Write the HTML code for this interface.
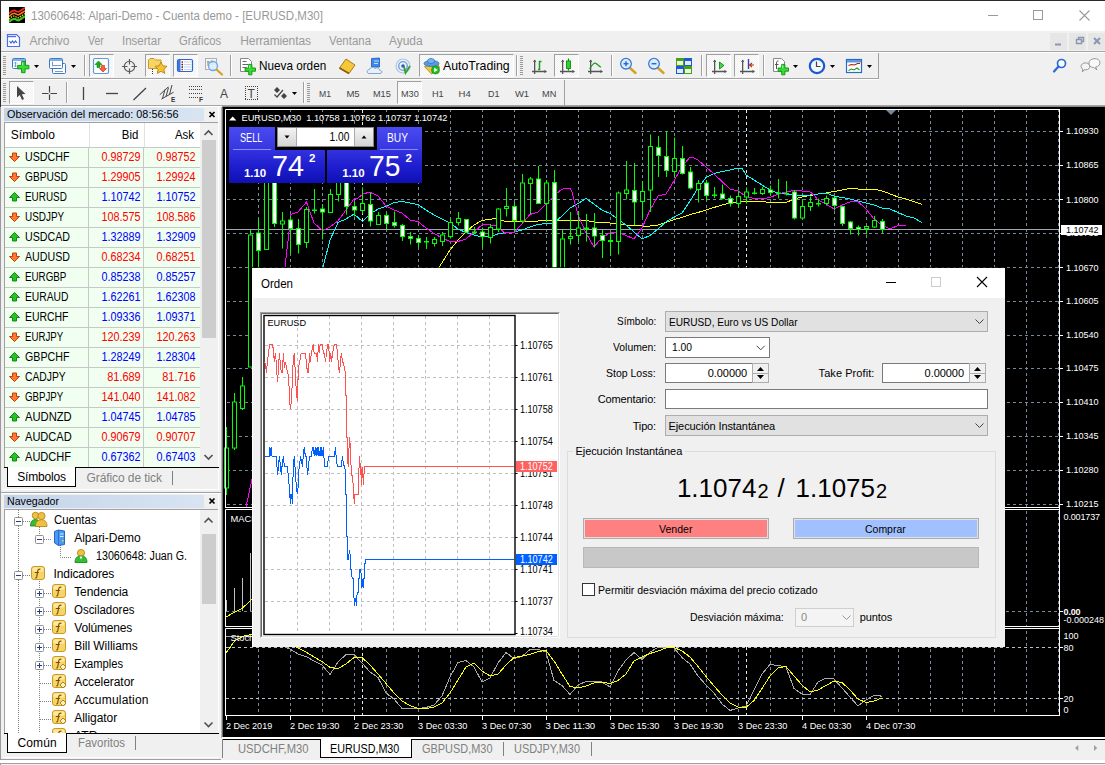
<!DOCTYPE html>
<html lang="es"><head><meta charset="utf-8"><title>13060648: Alpari-Demo - Cuenta demo - [EURUSD,M30]</title>
<style>
html,body{margin:0;padding:0;}
body{width:1105px;height:765px;overflow:hidden;position:relative;background:#f0f0f0;font-family:"Liberation Sans",sans-serif;font-size:12px;}
.t{position:absolute;white-space:pre;}
.r{position:absolute;box-sizing:border-box;}
svg{overflow:visible;}
svg text{font-family:"Liberation Sans",sans-serif;}
</style></head><body>
<div class="r" style="left:0px;top:0px;width:1105px;height:31px;background:#fff;"></div>
<div class="r" style="left:0px;top:0px;width:1105px;height:1px;background:#2a2a2a;"></div>
<svg class="r" style="left:9px;top:7px;overflow:hidden;" width="16" height="16" viewBox="0 0 16 16"><rect width="16" height="16" fill="#000"/><path d="M0 6.5 C2 4.5 4 2.5 6 3.5 S9 6 11 4 L16 0.8" stroke="#ff2a1a" stroke-width="1.7" fill="none"/><path d="M0 9.5 C2 7.5 4 5.5 6 6.5 S9 9 11 7 L16 3.8" stroke="#ff7a1a" stroke-width="1.6" fill="none"/><path d="M0 12.3 C2 10.3 4 8.3 6 9.3 S9 11.8 11 9.8 L16 6.6" stroke="#e8e010" stroke-width="1.3" fill="none" stroke-dasharray="1.5 1"/><path d="M0 15 C2 13 4 11 6 12 S9 14.5 11 12.5 L16 9.3" stroke="#3fc41c" stroke-width="2.2" fill="none"/></svg>
<div class="t" style="left:31.00px;top:7.80px;font-size:12px;line-height:16px;color:#999;transform:scaleX(0.9622);transform-origin:0 50%;">13060648: Alpari-Demo - Cuenta demo - [EURUSD,M30]</div>
<svg class="r" style="left:984px;top:9px;" width="110" height="14" viewBox="0 0 110 14"><path d="M4 6.500H14" stroke="#9a9a9a" stroke-width="1"/><rect x="49.5" y="1.5" width="9" height="9" fill="none" stroke="#9a9a9a" stroke-width="1"/><path d="M95.500 1.500L105.500 11.500M105.500 1.500L95.500 11.500" stroke="#9a9a9a" stroke-width="1.100"/></svg>
<div class="r" style="left:0px;top:31px;width:1105px;height:20px;background:#f0f0f0;"></div>
<svg class="r" style="left:6px;top:33px;" width="15" height="15" viewBox="0 0 15 15"><path d="M1.5 1.5H10.5L13.5 4.5V13.5H1.5Z" fill="#fff" stroke="#4a6cf0" stroke-width="1.2"/><path d="M1.5 3.5H10" stroke="#4a6cf0" stroke-width="1.4"/><path d="M3.5 8L5 10L6.5 8L8 10L9.5 8L11 10" stroke="#3a5ce0" stroke-width="1.1" fill="none"/></svg>
<div class="t" style="left:29.50px;top:33.20px;font-size:12px;line-height:16px;color:#9a9a9a;letter-spacing:-0.002px;">Archivo</div>
<div class="t" style="left:88.30px;top:33.20px;font-size:12px;line-height:16px;color:#9a9a9a;transform:scaleX(0.8717);transform-origin:0 50%;">Ver</div>
<div class="t" style="left:122.00px;top:33.20px;font-size:12px;line-height:16px;color:#9a9a9a;transform:scaleX(0.9587);transform-origin:0 50%;">Insertar</div>
<div class="t" style="left:179.40px;top:33.20px;font-size:12px;line-height:16px;color:#9a9a9a;transform:scaleX(0.9423);transform-origin:0 50%;">Gráficos</div>
<div class="t" style="left:240.30px;top:33.20px;font-size:12px;line-height:16px;color:#9a9a9a;letter-spacing:-0.127px;">Herramientas</div>
<div class="t" style="left:328.60px;top:33.20px;font-size:12px;line-height:16px;color:#9a9a9a;transform:scaleX(0.9536);transform-origin:0 50%;">Ventana</div>
<div class="t" style="left:389.00px;top:33.20px;font-size:12px;line-height:16px;color:#9a9a9a;letter-spacing:-0.042px;">Ayuda</div>
<div class="r" style="left:1050px;top:33px;width:17px;height:17px;background:#e6e6e6;"></div>
<div class="r" style="left:1069px;top:33px;width:17px;height:17px;background:#e6e6e6;"></div>
<div class="r" style="left:1088px;top:33px;width:17px;height:17px;background:#e6e6e6;"></div>
<svg class="r" style="left:1050px;top:33px;" width="55" height="17" viewBox="0 0 55 17"><path d="M5 11.5H11" stroke="#8a96b0" stroke-width="2"/><path d="M26.5 6.5H31.5V10.5H26.5Z M28.5 6.5V4.5H33.5V8.5H31.5" fill="none" stroke="#8a96b0" stroke-width="1.4"/><path d="M44 5L50 11M50 5L44 11" stroke="#8a96b0" stroke-width="2"/></svg>
<div class="r" style="left:0px;top:51px;width:1105px;height:1px;background:#a5a5a5;"></div>
<div class="r" style="left:0px;top:52px;width:1105px;height:1px;background:#fff;"></div>
<div class="r" style="left:0px;top:78px;width:879px;height:1px;background:#a5a5a5;"></div>
<div class="r" style="left:0px;top:79px;width:879px;height:1px;background:#fff;"></div>
<div class="r" style="left:0px;top:105px;width:1105px;height:1px;background:#a5a5a5;"></div>
<div class="r" style="left:0px;top:106px;width:1105px;height:1px;background:#fff;"></div>
<div class="r" style="left:0px;top:0px;width:1px;height:107px;background:#2a2a2a;"></div>
<div class="r" style="left:0px;top:107px;width:1px;height:658px;background:#9a9a9a;"></div>
<div class="r" style="left:89px;top:54px;width:25px;height:23px;background-image:conic-gradient(#fff 25%,#f0f0f0 0 50%,#fff 0 75%,#f0f0f0 0);background-size:2px 2px;border-top:1px solid #a0a0a0;border-left:1px solid #a0a0a0;border-bottom:1px solid #fff;border-right:1px solid #fff;"></div>
<div class="r" style="left:145px;top:54px;width:25px;height:23px;background-image:conic-gradient(#fff 25%,#f0f0f0 0 50%,#fff 0 75%,#f0f0f0 0);background-size:2px 2px;border-top:1px solid #a0a0a0;border-left:1px solid #a0a0a0;border-bottom:1px solid #fff;border-right:1px solid #fff;"></div>
<div class="r" style="left:173px;top:54px;width:25px;height:23px;background-image:conic-gradient(#fff 25%,#f0f0f0 0 50%,#fff 0 75%,#f0f0f0 0);background-size:2px 2px;border-top:1px solid #a0a0a0;border-left:1px solid #a0a0a0;border-bottom:1px solid #fff;border-right:1px solid #fff;"></div>
<div class="r" style="left:419px;top:54px;width:95px;height:23px;background-image:conic-gradient(#fff 25%,#f0f0f0 0 50%,#fff 0 75%,#f0f0f0 0);background-size:2px 2px;border-top:1px solid #a0a0a0;border-left:1px solid #a0a0a0;border-bottom:1px solid #fff;border-right:1px solid #fff;"></div>
<div class="r" style="left:554px;top:54px;width:25px;height:23px;background-image:conic-gradient(#fff 25%,#f0f0f0 0 50%,#fff 0 75%,#f0f0f0 0);background-size:2px 2px;border-top:1px solid #a0a0a0;border-left:1px solid #a0a0a0;border-bottom:1px solid #fff;border-right:1px solid #fff;"></div>
<div class="r" style="left:706px;top:54px;width:25px;height:23px;background-image:conic-gradient(#fff 25%,#f0f0f0 0 50%,#fff 0 75%,#f0f0f0 0);background-size:2px 2px;border-top:1px solid #a0a0a0;border-left:1px solid #a0a0a0;border-bottom:1px solid #fff;border-right:1px solid #fff;"></div>
<div class="r" style="left:734px;top:54px;width:25px;height:23px;background-image:conic-gradient(#fff 25%,#f0f0f0 0 50%,#fff 0 75%,#f0f0f0 0);background-size:2px 2px;border-top:1px solid #a0a0a0;border-left:1px solid #a0a0a0;border-bottom:1px solid #fff;border-right:1px solid #fff;"></div>
<div class="r" style="left:9px;top:81px;width:25px;height:23px;background-image:conic-gradient(#fff 25%,#f0f0f0 0 50%,#fff 0 75%,#f0f0f0 0);background-size:2px 2px;border-top:1px solid #a0a0a0;border-left:1px solid #a0a0a0;border-bottom:1px solid #fff;border-right:1px solid #fff;"></div>
<div class="r" style="left:397px;top:81px;width:25px;height:23px;background-image:conic-gradient(#fff 25%,#f0f0f0 0 50%,#fff 0 75%,#f0f0f0 0);background-size:2px 2px;border-top:1px solid #a0a0a0;border-left:1px solid #a0a0a0;border-bottom:1px solid #fff;border-right:1px solid #fff;"></div>
<svg class="r" style="left:0px;top:0px;" width="1105" height="765" viewBox="0 0 1105 765"><rect x="3" y="56" width="3" height="1" fill="#9a9a9a"/><rect x="3" y="58" width="3" height="1" fill="#9a9a9a"/><rect x="3" y="60" width="3" height="1" fill="#9a9a9a"/><rect x="3" y="62" width="3" height="1" fill="#9a9a9a"/><rect x="3" y="64" width="3" height="1" fill="#9a9a9a"/><rect x="3" y="66" width="3" height="1" fill="#9a9a9a"/><rect x="3" y="68" width="3" height="1" fill="#9a9a9a"/><rect x="3" y="70" width="3" height="1" fill="#9a9a9a"/><rect x="3" y="72" width="3" height="1" fill="#9a9a9a"/><rect x="3" y="74" width="3" height="1" fill="#9a9a9a"/><rect x="3" y="83" width="3" height="1" fill="#9a9a9a"/><rect x="3" y="85" width="3" height="1" fill="#9a9a9a"/><rect x="3" y="87" width="3" height="1" fill="#9a9a9a"/><rect x="3" y="89" width="3" height="1" fill="#9a9a9a"/><rect x="3" y="91" width="3" height="1" fill="#9a9a9a"/><rect x="3" y="93" width="3" height="1" fill="#9a9a9a"/><rect x="3" y="95" width="3" height="1" fill="#9a9a9a"/><rect x="3" y="97" width="3" height="1" fill="#9a9a9a"/><rect x="3" y="99" width="3" height="1" fill="#9a9a9a"/><rect x="3" y="101" width="3" height="1" fill="#9a9a9a"/><rect x="520" y="56" width="3" height="1" fill="#9a9a9a"/><rect x="520" y="58" width="3" height="1" fill="#9a9a9a"/><rect x="520" y="60" width="3" height="1" fill="#9a9a9a"/><rect x="520" y="62" width="3" height="1" fill="#9a9a9a"/><rect x="520" y="64" width="3" height="1" fill="#9a9a9a"/><rect x="520" y="66" width="3" height="1" fill="#9a9a9a"/><rect x="520" y="68" width="3" height="1" fill="#9a9a9a"/><rect x="520" y="70" width="3" height="1" fill="#9a9a9a"/><rect x="520" y="72" width="3" height="1" fill="#9a9a9a"/><rect x="520" y="74" width="3" height="1" fill="#9a9a9a"/><rect x="307" y="83" width="3" height="1" fill="#9a9a9a"/><rect x="307" y="85" width="3" height="1" fill="#9a9a9a"/><rect x="307" y="87" width="3" height="1" fill="#9a9a9a"/><rect x="307" y="89" width="3" height="1" fill="#9a9a9a"/><rect x="307" y="91" width="3" height="1" fill="#9a9a9a"/><rect x="307" y="93" width="3" height="1" fill="#9a9a9a"/><rect x="307" y="95" width="3" height="1" fill="#9a9a9a"/><rect x="307" y="97" width="3" height="1" fill="#9a9a9a"/><rect x="307" y="99" width="3" height="1" fill="#9a9a9a"/><rect x="307" y="101" width="3" height="1" fill="#9a9a9a"/><rect x="84" y="55" width="1" height="21" fill="#a0a0a0"/><rect x="85" y="55" width="1" height="21" fill="#fff"/><rect x="230" y="55" width="1" height="21" fill="#a0a0a0"/><rect x="231" y="55" width="1" height="21" fill="#fff"/><rect x="516" y="55" width="1" height="21" fill="#a0a0a0"/><rect x="517" y="55" width="1" height="21" fill="#fff"/><rect x="611" y="55" width="1" height="21" fill="#a0a0a0"/><rect x="612" y="55" width="1" height="21" fill="#fff"/><rect x="701" y="55" width="1" height="21" fill="#a0a0a0"/><rect x="702" y="55" width="1" height="21" fill="#fff"/><rect x="763" y="55" width="1" height="21" fill="#a0a0a0"/><rect x="764" y="55" width="1" height="21" fill="#fff"/><rect x="66" y="82" width="1" height="21" fill="#a0a0a0"/><rect x="67" y="82" width="1" height="21" fill="#fff"/><rect x="303" y="82" width="1" height="21" fill="#a0a0a0"/><rect x="304" y="82" width="1" height="21" fill="#fff"/><rect x="564" y="80" width="1" height="25" fill="#a0a0a0"/><rect x="878" y="53" width="1" height="26" fill="#a0a0a0"/><rect x="12.5" y="58.5" width="13" height="10" rx="1" fill="#fff" stroke="#3a7ac8"/><rect x="13" y="59" width="12" height="2" fill="#7fb0e8"/><path d="M15.5 62v5M14 63.5l1.5-1.5 1.5 1.5M14 65.5l1.5 1.5 1.5-1.5" stroke="#6a8ec0" stroke-width=".8" fill="none"/><path d="M21.55 61.5h3.5v3.85h3.85v3.5h-3.85v3.85h-3.5v-3.85h-3.85v-3.5h3.85z" fill="#35dd35" stroke="#109010" stroke-width=".9"/><path d="M22.45 62.5v2.85" stroke="#9cf59c" stroke-width="1"/><path d="M34 65h5l-2.5 3z" fill="#000"/><rect x="52.5" y="63.5" width="13" height="10" rx="1" fill="#fff" stroke="#3a7ac8"/><rect x="49.5" y="58.5" width="13" height="10" rx="1" fill="#fff" stroke="#3a7ac8"/><rect x="50" y="59" width="12" height="2" fill="#7fb0e8"/><path d="M52.5 61.5v5M53 65.5h8M55 71.5h8" stroke="#6a8ec0" stroke-width=".9" fill="none"/><path d="M71 65h5l-2.5 3z" fill="#000"/><rect x="93.5" y="58.5" width="15" height="15" rx="1.5" fill="#fff" stroke="#5a9ae0" stroke-width="1.2"/><path d="M98.5 61l3.5 3.5h-2v3h-3v-3h-2z" fill="#18b018" stroke="#0a800a" stroke-width=".6"/><path d="M103 72l-3.500-3.500h2v-3h3v3h2z" fill="#ff6040" stroke="#d02000" stroke-width=".6"/><circle cx="129.500" cy="66.500" r="5.200" fill="none" stroke="#5a5a5a" stroke-width="1.100"/><path d="M129.500 59v5.500M129.500 68.500v5.500M122 66.500h5.500M131.500 66.500h5.500" stroke="#5a5a5a" stroke-width="1.200"/><path d="M148.500 68.500v-8.500l1.500-1.500h4l1.500 1.500h5.500v8.500z" fill="#f8d468" stroke="#c89a20"/><path d="M161 62l1.800 3.800 4.200.5-3.100 2.900.8 4.200-3.700-2.100-3.700 2.100.8-4.200-3.100-2.900 4.200-.5z" fill="#f4c430" stroke="#b8860b" stroke-width=".9"/><path d="M152.500 69v5" stroke="#333" stroke-width="1" stroke-dasharray="1 1"/><rect x="177.500" y="59.500" width="15" height="12" rx="1.500" fill="#fff" stroke="#2a66d0" stroke-width="1.200"/><rect x="178" y="60" width="2.500" height="11" fill="#3a7ae0"/><path d="M184 62h7.500M184 64.500h7.500M184 67h7.500M184 69.500h7.500" stroke="#b4c8ec" stroke-width=".8"/><rect x="181.500" y="61.300" width="1.500" height="1.500" fill="#e00"/><rect x="181.500" y="63.800" width="1.500" height="1.500" fill="#222"/><rect x="181.500" y="66.300" width="1.500" height="1.500" fill="#222"/><rect x="181.500" y="68.800" width="1.500" height="1.500" fill="#e00"/><rect x="205.500" y="58.500" width="11" height="11" fill="#f4f4f4" stroke="#b0b0b0"/><path d="M208 61v5M212 60v5M207 62h6" stroke="#888" stroke-width=".9"/><circle cx="213" cy="66" r="4.500" fill="#d8ecff" fill-opacity=".85" stroke="#6aa8e8" stroke-width="1.300"/><path d="M216.500 69.500l5.500 5" stroke="#d8a020" stroke-width="2.200" stroke-linecap="round"/><path d="M240.500 58.500h8l3 3v10h-11z" fill="#fff" stroke="#888"/><path d="M242.500 61.500h4M242.500 64.500h6M242.500 67.500h4" stroke="#666" stroke-width="1"/><path d="M248.7 64.4h3.2v3.6h3.6v3.2h-3.6v3.6h-3.2v-3.6h-3.6v-3.2h3.6z" fill="#35dd35" stroke="#109010" stroke-width=".9"/><path d="M249.6 65.4v2.6" stroke="#9cf59c" stroke-width="1"/><path d="M339.500 68l6.500-9 9 6-6 8.500z" fill="#f4c838" stroke="#b07818" stroke-width="1"/><path d="M339.500 68l9.500 5.500" stroke="#8a5a10" stroke-width="1.600"/><path d="M371.500 58.500l8-.5v9h-8z" fill="#3a8ae8" stroke="#1a5ac0" stroke-width=".8"/><path d="M374 61h5M374 63.500h4" stroke="#cfe4ff" stroke-width=".9"/><path d="M369 73.500c-2.500 0-2.500-4 .5-4 .5-2.500 4-3 5.500-.8 1.500-1.800 4.500-.8 4.500 1.500 3 0 3 3.300.5 3.300z" fill="#e8f0fa" stroke="#7a9ac8" stroke-width=".9"/><circle cx="403" cy="66" r="7" fill="none" stroke="#a8c4e8" stroke-width="1.200"/><circle cx="403" cy="66" r="4.300" fill="none" stroke="#6a9ae0" stroke-width="1.300"/><circle cx="403" cy="66" r="1.800" fill="#2a5ad0"/><path d="M404 66.500l1.500 6.500 4.500-7" stroke="#30a030" stroke-width="1.800" fill="none"/><path d="M424.500 66.500l7 7.500 8-6.500-2-4z" fill="#f0c840" stroke="#b08818" stroke-width=".9"/><ellipse cx="431.500" cy="63.500" rx="7.500" ry="3" fill="#5a9ae0" stroke="#2a6ac0" stroke-width=".8"/><ellipse cx="431" cy="61" rx="3.500" ry="2.500" fill="#7ab4f0" stroke="#2a6ac0" stroke-width=".7"/><circle cx="435.500" cy="70" r="4" fill="#20c020" stroke="#0a800a" stroke-width=".6"/><path d="M434.200 67.800v4.400l3.600-2.200z" fill="#fff"/><path d="M534.65 60v14M532 71.500h13" stroke="#555" stroke-width="1.300" fill="none"/><path d="M533 62l1.650-2.500 1.650 2.500zM544.5 69.800l2.500 1.700-2.500 1.700z" fill="#555"/><path d="M538 69.500h1.500v-8h2" stroke="#18a018" stroke-width="1.500" fill="none"/><path d="M562.65 60v14M560 71.500h13" stroke="#555" stroke-width="1.300" fill="none"/><path d="M561 62l1.650-2.500 1.650 2.500zM572.5 69.800l2.500 1.700-2.500 1.700z" fill="#555"/><rect x="566.500" y="61" width="4" height="7.500" fill="#30d030" stroke="#0a900a" stroke-width=".9"/><path d="M568.500 58.500v2.500M568.500 68.500v2" stroke="#0a900a" stroke-width="1.200"/><path d="M590.65 60v14M588 71.500h13" stroke="#555" stroke-width="1.300" fill="none"/><path d="M589 62l1.650-2.500 1.650 2.500zM600.5 69.800l2.500 1.700-2.500 1.700z" fill="#555"/><path d="M589.500 69c2-2.500 3.500-6 5.500-5.800s3.500 3 6 4" stroke="#18a018" stroke-width="1.200" fill="none"/><path d="M630 68l5.500 5" stroke="#d8a020" stroke-width="2.400" stroke-linecap="round"/><circle cx="626" cy="63.700" r="5.300" fill="#dceeff" stroke="#3a7ad8" stroke-width="1.300"/><path d="M623.5 63.700h5" stroke="#2a6ad0" stroke-width="1.500"/><path d="M626 61.200v5" stroke="#2a6ad0" stroke-width="1.500"/><path d="M658 68l5.500 5" stroke="#d8a020" stroke-width="2.400" stroke-linecap="round"/><circle cx="654" cy="63.700" r="5.300" fill="#dceeff" stroke="#3a7ad8" stroke-width="1.300"/><path d="M651.5 63.700h5" stroke="#2a6ad0" stroke-width="1.500"/><rect x="676" y="58" width="8" height="8" fill="#48a018"/><rect x="684" y="58" width="8" height="8" fill="#2058d0"/><rect x="676" y="66" width="8" height="8" fill="#2058d0"/><rect x="684" y="66" width="8" height="8" fill="#48a018"/><rect x="677" y="61" width="6" height="4" fill="#e8ffe0"/><rect x="685" y="61" width="6" height="4" fill="#e0ecff"/><rect x="677" y="69" width="6" height="4" fill="#e0ecff"/><rect x="685" y="69" width="6" height="4" fill="#e8ffe0"/><path d="M714.65 60v14M712 71.500h13" stroke="#555" stroke-width="1.300" fill="none"/><path d="M713 62l1.650-2.500 1.650 2.500zM724.5 69.800l2.500 1.700-2.500 1.700z" fill="#555"/><path d="M719.500 62v7l4.500-3.500z" fill="#50d050" stroke="#0a900a" stroke-width=".9"/><path d="M742.65 60v14M740 71.500h13" stroke="#555" stroke-width="1.300" fill="none"/><path d="M741 62l1.650-2.500 1.650 2.500zM752.5 69.800l2.500 1.700-2.500 1.700z" fill="#555"/><path d="M748.500 59v10" stroke="#1a4ac0" stroke-width="1.400"/><path d="M754 65h-4M752 63l-2.500 2 2.500 2" stroke="#d03000" stroke-width="1.200" fill="none"/><path d="M773.500 58.500h8l3 3v10h-11z" fill="#fff" stroke="#888"/><path d="M778.500 61c-1.500 0-2 .5-2 2v6M775 64.500h3.500" stroke="#555" stroke-width="1" fill="none"/><path d="M781.7 64.4h3.2v3.6h3.6v3.2h-3.6v3.6h-3.2v-3.6h-3.6v-3.2h3.6z" fill="#35dd35" stroke="#109010" stroke-width=".9"/><path d="M782.6 65.4v2.6" stroke="#9cf59c" stroke-width="1"/><path d="M793 65h5l-2.5 3z" fill="#000"/><circle cx="817" cy="66" r="7.200" fill="#f4f8ff" stroke="#1a5ad0" stroke-width="2.200"/><path d="M816.500 61.500v5h4" stroke="#444" stroke-width="1.200" fill="none"/><path d="M830 65h5l-2.5 3z" fill="#000"/><rect x="846.500" y="59.500" width="15" height="13" fill="#fff" stroke="#2a6ac0" stroke-width="1.200"/><rect x="847" y="60" width="14" height="2.500" fill="#5a9ae8"/><path d="M848.500 65.500l3-1 3 .5 3-1.500 2.500 0" stroke="#b02000" stroke-width="1.100" fill="none"/><path d="M848.500 70.500l3-1.500 2.500 1 3-2 2.500 2" stroke="#18a018" stroke-width="1.100" fill="none"/><path d="M867 65h5l-2.5 3z" fill="#000"/><circle cx="1061.500" cy="63.500" r="4" fill="#fff" stroke="#2a6ad8" stroke-width="1.700"/><path d="M1058.500 66.500l-4.500 5" stroke="#2a6ad8" stroke-width="2.200" stroke-linecap="round"/><path d="M1081 66.500a4.500 3.500 0 1 1 3 3.200l-1.500 2.300v-2.800z" fill="#f4f4f4" stroke="#999" stroke-width="1"/><path d="M1089 63a5.500 4.200 0 1 1 6.500 4l1.500 2.800-3.500-2.300a5.500 4.200 0 0 1-4.500-4.500z" fill="#f8f8f8" stroke="#999" stroke-width="1"/><path d="M17 86v11.500l2.800-2.600 2.200 5 2-.9-2.200-4.800 3.700-.2z" fill="#444"/><path d="M49.500 86v14M42 93.500h15" stroke="#444" stroke-width="1.200"/><rect x="48.500" y="92.500" width="2" height="2" fill="#f0f0f0"/><path d="M83.500 87v13" stroke="#444" stroke-width="1.300"/><path d="M106 93.500h12" stroke="#444" stroke-width="1.300"/><path d="M133.500 100l12.500-12" stroke="#444" stroke-width="1.300"/><path d="M159.800 94.700l8.500-7.800M161.400 99.100l12.200-6.900M162.500 98.500l2.500-9M166 96.500l2.500-9M169.500 94.500l2.500-9.500" stroke="#444" stroke-width="1" fill="none"/><path d="M189 86.500h13M189 89.500h13M189 93.500h13M189 97.500h9" stroke="#444" stroke-width="1" stroke-dasharray="1 1"/><path d="M245 86.500H258M245 99.500H258M245.500 86V100M257.500 86V100" fill="none" stroke="#444" stroke-width="1" stroke-dasharray="1 1"/><path d="M277 87l3 3-3 3-3-3zM284 93l3 3-3 3-3-3z" fill="#444"/><path d="M274.500 94.500l2.500 2.500 6-7" stroke="#444" stroke-width="1.200" fill="none"/><path d="M292 92h5l-2.5 3z" fill="#000"/></svg>
<div class="t" style="left:171.00px;top:94.65px;font-size:6.5px;line-height:10.5px;color:#333;font-weight:bold;">E</div>
<div class="t" style="left:198.90px;top:94.65px;font-size:6.5px;line-height:10.5px;color:#333;font-weight:bold;">F</div>
<div class="t" style="left:220.00px;top:86.10px;font-size:12px;line-height:16px;color:#444;">A</div>
<div class="t" style="left:247.50px;top:86.10px;font-size:12px;line-height:16px;color:#444;">T</div>
<div class="t" style="left:259.30px;top:57.10px;font-size:13px;line-height:17px;color:#000;transform:scaleX(0.9027);transform-origin:0 50%;">Nueva orden</div>
<div class="t" style="left:443.30px;top:57.10px;font-size:13px;line-height:17px;color:#000;transform:scaleX(0.9482);transform-origin:0 50%;">AutoTrading</div>
<div class="t" style="left:319.00px;top:87.35px;font-size:9.5px;line-height:13.5px;color:#444;transform:scaleX(0.9093);transform-origin:0 50%;">M1</div>
<div class="t" style="left:346.50px;top:87.35px;font-size:9.5px;line-height:13.5px;color:#444;letter-spacing:-0.199px;">M5</div>
<div class="t" style="left:372.60px;top:87.35px;font-size:9.5px;line-height:13.5px;color:#444;transform:scaleX(0.9578);transform-origin:0 50%;">M15</div>
<div class="t" style="left:400.60px;top:87.35px;font-size:9.5px;line-height:13.5px;color:#444;transform:scaleX(0.9578);transform-origin:0 50%;">M30</div>
<div class="t" style="left:431.60px;top:87.35px;font-size:9.5px;line-height:13.5px;color:#444;transform:scaleX(0.9634);transform-origin:0 50%;">H1</div>
<div class="t" style="left:458.50px;top:87.35px;font-size:9.5px;line-height:13.5px;color:#444;letter-spacing:0.178px;">H4</div>
<div class="t" style="left:487.60px;top:87.35px;font-size:9.5px;line-height:13.5px;color:#444;transform:scaleX(0.9387);transform-origin:0 50%;">D1</div>
<div class="t" style="left:515.00px;top:87.35px;font-size:9.5px;line-height:13.5px;color:#444;letter-spacing:-0.125px;">W1</div>
<div class="t" style="left:542.00px;top:87.35px;font-size:9.5px;line-height:13.5px;color:#444;transform:scaleX(0.9678);transform-origin:0 50%;">MN</div>
<div class="r" style="left:4px;top:108px;width:200px;height:13px;background:linear-gradient(90deg,#c4d4e8,#d8e4f2);"></div>
<div class="t" style="left:6.50px;top:107.45px;font-size:11.5px;line-height:15.5px;color:#000;transform:scaleX(0.9412);transform-origin:0 50%;">Observación del mercado: 08:56:56</div>
<div class="r" style="left:4px;top:122px;width:215px;height:345px;background:#fff;border-left:1px solid #a0a0a0;border-top:1px solid #a0a0a0;"></div>
<div class="r" style="left:5px;top:148px;width:195px;height:319px;background:#f0fff0;"></div>
<svg class="r" style="left:0px;top:0px;" width="1105" height="765" viewBox="0 0 1105 765"><rect x="5" y="147" width="195" height="1" fill="#c8c8c8"/><rect x="89" y="123" width="1" height="24" fill="#e2e2e2"/><rect x="144" y="123" width="1" height="24" fill="#e2e2e2"/><rect x="88" y="148" width="1" height="319" fill="#c8c8c8"/><rect x="143" y="148" width="1" height="319" fill="#c8c8c8"/><rect x="5" y="167" width="195" height="1" fill="#c8c8c8"/><rect x="5" y="187" width="195" height="1" fill="#c8c8c8"/><rect x="5" y="207" width="195" height="1" fill="#c8c8c8"/><rect x="5" y="227" width="195" height="1" fill="#c8c8c8"/><rect x="5" y="247" width="195" height="1" fill="#c8c8c8"/><rect x="5" y="267" width="195" height="1" fill="#c8c8c8"/><rect x="5" y="287" width="195" height="1" fill="#c8c8c8"/><rect x="5" y="307" width="195" height="1" fill="#c8c8c8"/><rect x="5" y="327" width="195" height="1" fill="#c8c8c8"/><rect x="5" y="347" width="195" height="1" fill="#c8c8c8"/><rect x="5" y="367" width="195" height="1" fill="#c8c8c8"/><rect x="5" y="387" width="195" height="1" fill="#c8c8c8"/><rect x="5" y="407" width="195" height="1" fill="#c8c8c8"/><rect x="5" y="427" width="195" height="1" fill="#c8c8c8"/><rect x="5" y="447" width="195" height="1" fill="#c8c8c8"/><rect x="5" y="467" width="195" height="1" fill="#c8c8c8"/><rect x="200" y="123" width="18" height="344" fill="#f0f0f0"/><rect x="202" y="140" width="14" height="198" fill="#cdcdcd"/><path d="M204.500 135l4-4 4 4" stroke="#505050" stroke-width="1.600" fill="none"/><path d="M204.500 455l4 4 4-4" stroke="#505050" stroke-width="1.600" fill="none"/><rect x="218" y="107" width="1" height="383" fill="#fff"/><path d="M209.500 112l5 5M214.500 112l-5 5" stroke="#000" stroke-width="1.700"/><path d="M14.500 161.5l5-5h-3v-3.500h-4v3.500h-3z" fill="#ff7a30" stroke="#c03000" stroke-width=".9"/><path d="M14.500 181.5l5-5h-3v-3.500h-4v3.500h-3z" fill="#ff7a30" stroke="#c03000" stroke-width=".9"/><path d="M14.500 192.5l5 5h-3v3.500h-4v-3.500h-3z" fill="#22c322" stroke="#0a7a0a" stroke-width=".9"/><path d="M14.500 221.5l5-5h-3v-3.500h-4v3.500h-3z" fill="#ff7a30" stroke="#c03000" stroke-width=".9"/><path d="M14.500 232.5l5 5h-3v3.500h-4v-3.500h-3z" fill="#22c322" stroke="#0a7a0a" stroke-width=".9"/><path d="M14.500 261.5l5-5h-3v-3.500h-4v3.500h-3z" fill="#ff7a30" stroke="#c03000" stroke-width=".9"/><path d="M14.500 272.5l5 5h-3v3.500h-4v-3.500h-3z" fill="#22c322" stroke="#0a7a0a" stroke-width=".9"/><path d="M14.500 292.5l5 5h-3v3.500h-4v-3.500h-3z" fill="#22c322" stroke="#0a7a0a" stroke-width=".9"/><path d="M14.500 312.5l5 5h-3v3.500h-4v-3.500h-3z" fill="#22c322" stroke="#0a7a0a" stroke-width=".9"/><path d="M14.500 341.5l5-5h-3v-3.500h-4v3.500h-3z" fill="#ff7a30" stroke="#c03000" stroke-width=".9"/><path d="M14.500 352.5l5 5h-3v3.500h-4v-3.500h-3z" fill="#22c322" stroke="#0a7a0a" stroke-width=".9"/><path d="M14.500 381.5l5-5h-3v-3.500h-4v3.500h-3z" fill="#ff7a30" stroke="#c03000" stroke-width=".9"/><path d="M14.500 401.5l5-5h-3v-3.500h-4v3.500h-3z" fill="#ff7a30" stroke="#c03000" stroke-width=".9"/><path d="M14.500 412.5l5 5h-3v3.500h-4v-3.500h-3z" fill="#22c322" stroke="#0a7a0a" stroke-width=".9"/><path d="M14.500 441.5l5-5h-3v-3.500h-4v3.500h-3z" fill="#ff7a30" stroke="#c03000" stroke-width=".9"/><path d="M14.500 452.5l5 5h-3v3.500h-4v-3.500h-3z" fill="#22c322" stroke="#0a7a0a" stroke-width=".9"/></svg>
<div class="t" style="left:10.80px;top:127.30px;font-size:12px;line-height:16px;color:#000;letter-spacing:-0.003px;">Símbolo</div>
<div class="t" style="left:121.46px;top:127.30px;font-size:12px;line-height:16px;color:#000;transform:scaleX(0.9514);transform-origin:100% 50%;">Bid</div>
<div class="t" style="left:174.00px;top:127.30px;font-size:12px;line-height:16px;color:#000;transform:scaleX(0.9498);transform-origin:100% 50%;">Ask</div>
<div class="t" style="left:25.20px;top:149.30px;font-size:12px;line-height:16px;color:#000;transform:scaleX(0.8880);transform-origin:0 50%;">USDCHF</div>
<div class="t" style="left:97.32px;top:149.30px;font-size:12px;line-height:16px;color:#ff0000;transform:scaleX(0.8991);transform-origin:100% 50%;">0.98729</div>
<div class="t" style="left:152.42px;top:149.30px;font-size:12px;line-height:16px;color:#ff0000;transform:scaleX(0.8991);transform-origin:100% 50%;">0.98752</div>
<div class="t" style="left:25.20px;top:169.30px;font-size:12px;line-height:16px;color:#000;transform:scaleX(0.8465);transform-origin:0 50%;">GBPUSD</div>
<div class="t" style="left:97.32px;top:169.30px;font-size:12px;line-height:16px;color:#ff0000;transform:scaleX(0.8991);transform-origin:100% 50%;">1.29905</div>
<div class="t" style="left:152.42px;top:169.30px;font-size:12px;line-height:16px;color:#ff0000;transform:scaleX(0.8991);transform-origin:100% 50%;">1.29924</div>
<div class="t" style="left:25.20px;top:189.30px;font-size:12px;line-height:16px;color:#000;transform:scaleX(0.8249);transform-origin:0 50%;">EURUSD</div>
<div class="t" style="left:97.32px;top:189.30px;font-size:12px;line-height:16px;color:#0000ff;transform:scaleX(0.8991);transform-origin:100% 50%;">1.10742</div>
<div class="t" style="left:152.42px;top:189.30px;font-size:12px;line-height:16px;color:#0000ff;transform:scaleX(0.8991);transform-origin:100% 50%;">1.10752</div>
<div class="t" style="left:25.20px;top:209.30px;font-size:12px;line-height:16px;color:#000;transform:scaleX(0.8280);transform-origin:0 50%;">USDJPY</div>
<div class="t" style="left:97.32px;top:209.30px;font-size:12px;line-height:16px;color:#ff0000;transform:scaleX(0.8991);transform-origin:100% 50%;">108.575</div>
<div class="t" style="left:152.42px;top:209.30px;font-size:12px;line-height:16px;color:#ff0000;transform:scaleX(0.8991);transform-origin:100% 50%;">108.586</div>
<div class="t" style="left:25.20px;top:229.30px;font-size:12px;line-height:16px;color:#000;transform:scaleX(0.8881);transform-origin:0 50%;">USDCAD</div>
<div class="t" style="left:97.32px;top:229.30px;font-size:12px;line-height:16px;color:#0000ff;transform:scaleX(0.8991);transform-origin:100% 50%;">1.32889</div>
<div class="t" style="left:152.42px;top:229.30px;font-size:12px;line-height:16px;color:#0000ff;transform:scaleX(0.8991);transform-origin:100% 50%;">1.32909</div>
<div class="t" style="left:25.20px;top:249.30px;font-size:12px;line-height:16px;color:#000;transform:scaleX(0.8881);transform-origin:0 50%;">AUDUSD</div>
<div class="t" style="left:97.32px;top:249.30px;font-size:12px;line-height:16px;color:#ff0000;transform:scaleX(0.8991);transform-origin:100% 50%;">0.68234</div>
<div class="t" style="left:152.42px;top:249.30px;font-size:12px;line-height:16px;color:#ff0000;transform:scaleX(0.8991);transform-origin:100% 50%;">0.68251</div>
<div class="t" style="left:25.20px;top:269.30px;font-size:12px;line-height:16px;color:#000;transform:scaleX(0.8169);transform-origin:0 50%;">EURGBP</div>
<div class="t" style="left:97.32px;top:269.30px;font-size:12px;line-height:16px;color:#0000ff;transform:scaleX(0.8991);transform-origin:100% 50%;">0.85238</div>
<div class="t" style="left:152.42px;top:269.30px;font-size:12px;line-height:16px;color:#0000ff;transform:scaleX(0.8991);transform-origin:100% 50%;">0.85257</div>
<div class="t" style="left:25.20px;top:289.30px;font-size:12px;line-height:16px;color:#000;transform:scaleX(0.8585);transform-origin:0 50%;">EURAUD</div>
<div class="t" style="left:97.32px;top:289.30px;font-size:12px;line-height:16px;color:#0000ff;transform:scaleX(0.8991);transform-origin:100% 50%;">1.62261</div>
<div class="t" style="left:152.42px;top:289.30px;font-size:12px;line-height:16px;color:#0000ff;transform:scaleX(0.8991);transform-origin:100% 50%;">1.62308</div>
<div class="t" style="left:25.20px;top:309.30px;font-size:12px;line-height:16px;color:#000;transform:scaleX(0.8700);transform-origin:0 50%;">EURCHF</div>
<div class="t" style="left:97.32px;top:309.30px;font-size:12px;line-height:16px;color:#0000ff;transform:scaleX(0.8991);transform-origin:100% 50%;">1.09336</div>
<div class="t" style="left:152.42px;top:309.30px;font-size:12px;line-height:16px;color:#0000ff;transform:scaleX(0.8991);transform-origin:100% 50%;">1.09371</div>
<div class="t" style="left:25.20px;top:329.30px;font-size:12px;line-height:16px;color:#000;transform:scaleX(0.8069);transform-origin:0 50%;">EURJPY</div>
<div class="t" style="left:97.32px;top:329.30px;font-size:12px;line-height:16px;color:#ff0000;transform:scaleX(0.8991);transform-origin:100% 50%;">120.239</div>
<div class="t" style="left:152.42px;top:329.30px;font-size:12px;line-height:16px;color:#ff0000;transform:scaleX(0.8991);transform-origin:100% 50%;">120.263</div>
<div class="t" style="left:25.20px;top:349.30px;font-size:12px;line-height:16px;color:#000;transform:scaleX(0.8879);transform-origin:0 50%;">GBPCHF</div>
<div class="t" style="left:97.32px;top:349.30px;font-size:12px;line-height:16px;color:#0000ff;transform:scaleX(0.8991);transform-origin:100% 50%;">1.28249</div>
<div class="t" style="left:152.42px;top:349.30px;font-size:12px;line-height:16px;color:#0000ff;transform:scaleX(0.8991);transform-origin:100% 50%;">1.28304</div>
<div class="t" style="left:25.20px;top:369.30px;font-size:12px;line-height:16px;color:#000;transform:scaleX(0.8597);transform-origin:0 50%;">CADJPY</div>
<div class="t" style="left:104.00px;top:369.30px;font-size:12px;line-height:16px;color:#ff0000;transform:scaleX(0.9108);transform-origin:100% 50%;">81.689</div>
<div class="t" style="left:159.10px;top:369.30px;font-size:12px;line-height:16px;color:#ff0000;transform:scaleX(0.9108);transform-origin:100% 50%;">81.716</div>
<div class="t" style="left:25.20px;top:389.30px;font-size:12px;line-height:16px;color:#000;transform:scaleX(0.8068);transform-origin:0 50%;">GBPJPY</div>
<div class="t" style="left:97.32px;top:389.30px;font-size:12px;line-height:16px;color:#ff0000;transform:scaleX(0.8991);transform-origin:100% 50%;">141.040</div>
<div class="t" style="left:152.42px;top:389.30px;font-size:12px;line-height:16px;color:#ff0000;transform:scaleX(0.8991);transform-origin:100% 50%;">141.082</div>
<div class="t" style="left:25.20px;top:409.30px;font-size:12px;line-height:16px;color:#000;transform:scaleX(0.9340);transform-origin:0 50%;">AUDNZD</div>
<div class="t" style="left:97.32px;top:409.30px;font-size:12px;line-height:16px;color:#0000ff;transform:scaleX(0.8991);transform-origin:100% 50%;">1.04745</div>
<div class="t" style="left:152.42px;top:409.30px;font-size:12px;line-height:16px;color:#0000ff;transform:scaleX(0.8991);transform-origin:100% 50%;">1.04785</div>
<div class="t" style="left:25.20px;top:429.30px;font-size:12px;line-height:16px;color:#000;transform:scaleX(0.9216);transform-origin:0 50%;">AUDCAD</div>
<div class="t" style="left:97.32px;top:429.30px;font-size:12px;line-height:16px;color:#ff0000;transform:scaleX(0.8991);transform-origin:100% 50%;">0.90679</div>
<div class="t" style="left:152.42px;top:429.30px;font-size:12px;line-height:16px;color:#ff0000;transform:scaleX(0.8991);transform-origin:100% 50%;">0.90707</div>
<div class="t" style="left:25.20px;top:449.30px;font-size:12px;line-height:16px;color:#000;transform:scaleX(0.9220);transform-origin:0 50%;">AUDCHF</div>
<div class="t" style="left:97.32px;top:449.30px;font-size:12px;line-height:16px;color:#0000ff;transform:scaleX(0.8991);transform-origin:100% 50%;">0.67362</div>
<div class="t" style="left:152.42px;top:449.30px;font-size:12px;line-height:16px;color:#0000ff;transform:scaleX(0.8991);transform-origin:100% 50%;">0.67403</div>
<div class="r" style="left:4px;top:467px;width:215px;height:1px;background:#000;"></div>
<div class="r" style="left:7px;top:467px;width:69px;height:20px;background:#fff;border:1px solid #000;border-top:none;"></div>
<div class="t" style="left:17.30px;top:469.30px;font-size:12px;line-height:16px;color:#000;letter-spacing:-0.178px;">Símbolos</div>
<div class="t" style="left:86.50px;top:469.60px;font-size:12px;line-height:16px;color:#808080;letter-spacing:-0.086px;">Gráfico de tick</div>
<div class="r" style="left:172px;top:471px;width:1px;height:14px;background:#808080;"></div>
<div class="r" style="left:3px;top:489px;width:216px;height:1px;background:#fff;"></div>
<div class="r" style="left:1px;top:492px;width:220px;height:1px;background:#a0a0a0;"></div>
<div class="r" style="left:1px;top:493px;width:220px;height:1px;background:#fff;"></div>
<div class="r" style="left:4px;top:495px;width:200px;height:13px;background:linear-gradient(90deg,#c4d4e8,#d8e4f2);"></div>
<div class="t" style="left:6.50px;top:494.45px;font-size:11.5px;line-height:15.5px;color:#000;transform:scaleX(0.9242);transform-origin:0 50%;">Navegador</div>
<div class="r" style="left:4px;top:509px;width:215px;height:224px;background:#fff;border-left:1px solid #a0a0a0;border-top:1px solid #a0a0a0;"></div>
<svg class="r" style="left:0px;top:0px;overflow:hidden;" width="1105" height="733" viewBox="0 0 1105 733"><path d="M209.500 498.500l5 5M214.500 498.500l-5 5" stroke="#000" stroke-width="1.700"/><rect x="200" y="510" width="18" height="223" fill="#f0f0f0"/><rect x="202" y="534" width="14" height="70" fill="#cdcdcd"/><path d="M204.500 522.500l4-4 4 4" stroke="#505050" stroke-width="1.600" fill="none"/><path d="M204.500 722.500l4 4 4-4" stroke="#505050" stroke-width="1.600" fill="none"/><rect x="218" y="494" width="1" height="264" fill="#fff"/><path d="M18.500 510v224" stroke="#808080" stroke-width="1" stroke-dasharray="1 1" fill="none"/><path d="M39.500 527v9M39.500 581v153" stroke="#808080" stroke-width="1" stroke-dasharray="1 1" fill="none"/><path d="M60.500 545v12.500h11" stroke="#808080" stroke-width="1" stroke-dasharray="1 1" fill="none"/><path d="M23 521.5h7" stroke="#808080" stroke-width="1" stroke-dasharray="1 1" fill="none"/><path d="M23 575.5h7" stroke="#808080" stroke-width="1" stroke-dasharray="1 1" fill="none"/><path d="M44 593.5h7" stroke="#808080" stroke-width="1" stroke-dasharray="1 1" fill="none"/><path d="M44 611.5h7" stroke="#808080" stroke-width="1" stroke-dasharray="1 1" fill="none"/><path d="M44 629.5h7" stroke="#808080" stroke-width="1" stroke-dasharray="1 1" fill="none"/><path d="M44 647.5h7" stroke="#808080" stroke-width="1" stroke-dasharray="1 1" fill="none"/><path d="M44 665.5h7" stroke="#808080" stroke-width="1" stroke-dasharray="1 1" fill="none"/><path d="M40 683.5h11" stroke="#808080" stroke-width="1" stroke-dasharray="1 1" fill="none"/><path d="M40 701.5h11" stroke="#808080" stroke-width="1" stroke-dasharray="1 1" fill="none"/><path d="M40 719.5h11" stroke="#808080" stroke-width="1" stroke-dasharray="1 1" fill="none"/><path d="M40 737.5h11" stroke="#808080" stroke-width="1" stroke-dasharray="1 1" fill="none"/><path d="M44 539.500h7" stroke="#808080" stroke-width="1" stroke-dasharray="1 1" fill="none"/><rect x="14.5" y="517.5" width="8" height="8" rx="1" fill="#fff" stroke="#909090"/><path d="M16 521.5h5" stroke="#2a3a8a" stroke-width="1"/><rect x="35.5" y="535.5" width="8" height="8" rx="1" fill="#fff" stroke="#909090"/><path d="M37 539.5h5" stroke="#2a3a8a" stroke-width="1"/><rect x="14.5" y="571.5" width="8" height="8" rx="1" fill="#fff" stroke="#909090"/><path d="M16 575.5h5" stroke="#2a3a8a" stroke-width="1"/><rect x="35.5" y="589.5" width="8" height="8" rx="1" fill="#fff" stroke="#909090"/><path d="M37 593.5h5" stroke="#2a3a8a" stroke-width="1"/><path d="M39.5 591v5" stroke="#2a3a8a" stroke-width="1"/><rect x="35.5" y="607.5" width="8" height="8" rx="1" fill="#fff" stroke="#909090"/><path d="M37 611.5h5" stroke="#2a3a8a" stroke-width="1"/><path d="M39.5 609v5" stroke="#2a3a8a" stroke-width="1"/><rect x="35.5" y="625.5" width="8" height="8" rx="1" fill="#fff" stroke="#909090"/><path d="M37 629.5h5" stroke="#2a3a8a" stroke-width="1"/><path d="M39.5 627v5" stroke="#2a3a8a" stroke-width="1"/><rect x="35.5" y="643.5" width="8" height="8" rx="1" fill="#fff" stroke="#909090"/><path d="M37 647.5h5" stroke="#2a3a8a" stroke-width="1"/><path d="M39.5 645v5" stroke="#2a3a8a" stroke-width="1"/><rect x="35.5" y="661.5" width="8" height="8" rx="1" fill="#fff" stroke="#909090"/><path d="M37 665.5h5" stroke="#2a3a8a" stroke-width="1"/><path d="M39.5 663v5" stroke="#2a3a8a" stroke-width="1"/><circle cx="35.500" cy="515.500" r="3.300" fill="#f0c040" stroke="#b08010" stroke-width=".8"/><path d="M30.500 526c0-4.500 2-6.500 5-6.500s5 2 5 6.500z" fill="#30c030" stroke="#108010" stroke-width=".8"/><circle cx="41.500" cy="516" r="3.600" fill="#f0c040" stroke="#b08010" stroke-width=".8"/><path d="M35.500 526.500c0-5 2.500-6.800 6-6.800s5.500 2 5.500 6.800z" fill="#f0c040" stroke="#b08010" stroke-width=".8"/><path d="M54.500 531.500l4-1.500 6 1v13.500l-6 1-4-2.500z" fill="#4a9af0" stroke="#1a5ac0" stroke-width=".9"/><path d="M58.500 530.500v15" stroke="#1a5ac0" stroke-width=".7"/><path d="M60 534h3.500M60 536.500h3.500" stroke="#d8eaff" stroke-width="1"/><rect x="62" y="540" width="1.500" height="1.500" fill="#f0d040"/><circle cx="81" cy="553" r="3.600" fill="#f0c040" stroke="#b08010" stroke-width=".8"/><path d="M75 562.500c0-5 2.500-6.500 6-6.500s6 1.500 6 6.500z" fill="#30c030" stroke="#108010" stroke-width=".8"/><path d="M79.500 556.500l1.500 3 1.500-3z" fill="#fff"/><rect x="31.5" y="566.5" width="13" height="13" rx="2.500" fill="#f7d468" stroke="#c89a28"/><rect x="32.5" y="567.5" width="11" height="4" rx="1.500" fill="#fdeaa0"/><path d="M40.5 569.2c-1.800-.4-2.600.6-2.800 2l-.9 5.500c-.2 1-.7 1.300-1.500 1.100M34.8 572.5h4" stroke="#7a4a00" stroke-width="1.100" fill="none"/><rect x="52.5" y="584.5" width="13" height="13" rx="2.500" fill="#f7d468" stroke="#c89a28"/><rect x="53.5" y="585.5" width="11" height="4" rx="1.500" fill="#fdeaa0"/><path d="M61.5 587.2c-1.800-.4-2.600.6-2.800 2l-.9 5.500c-.2 1-.7 1.300-1.500 1.100M55.8 590.5h4" stroke="#7a4a00" stroke-width="1.100" fill="none"/><rect x="52.5" y="602.5" width="13" height="13" rx="2.500" fill="#f7d468" stroke="#c89a28"/><rect x="53.5" y="603.5" width="11" height="4" rx="1.500" fill="#fdeaa0"/><path d="M61.5 605.2c-1.800-.4-2.600.6-2.800 2l-.9 5.500c-.2 1-.7 1.300-1.500 1.100M55.8 608.5h4" stroke="#7a4a00" stroke-width="1.100" fill="none"/><rect x="52.5" y="620.5" width="13" height="13" rx="2.500" fill="#f7d468" stroke="#c89a28"/><rect x="53.5" y="621.5" width="11" height="4" rx="1.500" fill="#fdeaa0"/><path d="M61.5 623.2c-1.800-.4-2.600.6-2.800 2l-.9 5.500c-.2 1-.7 1.300-1.500 1.100M55.8 626.5h4" stroke="#7a4a00" stroke-width="1.100" fill="none"/><rect x="52.5" y="638.5" width="13" height="13" rx="2.500" fill="#f7d468" stroke="#c89a28"/><rect x="53.5" y="639.5" width="11" height="4" rx="1.500" fill="#fdeaa0"/><path d="M61.5 641.2c-1.800-.4-2.600.6-2.800 2l-.9 5.500c-.2 1-.7 1.300-1.500 1.100M55.8 644.5h4" stroke="#7a4a00" stroke-width="1.100" fill="none"/><rect x="52.5" y="656.5" width="13" height="13" rx="2.500" fill="#f7d468" stroke="#c89a28"/><rect x="53.5" y="657.5" width="11" height="4" rx="1.500" fill="#fdeaa0"/><path d="M61.5 659.2c-1.800-.4-2.600.6-2.800 2l-.9 5.500c-.2 1-.7 1.300-1.500 1.100M55.8 662.5h4" stroke="#7a4a00" stroke-width="1.100" fill="none"/><path d="M63 664l3 3-3 3-3-3z" fill="#fff4c0" stroke="#a87818" stroke-width=".9"/><rect x="52.5" y="674.5" width="13" height="13" rx="2.500" fill="#f7d468" stroke="#c89a28"/><rect x="53.5" y="675.5" width="11" height="4" rx="1.500" fill="#fdeaa0"/><path d="M61.5 677.2c-1.800-.4-2.600.6-2.800 2l-.9 5.500c-.2 1-.7 1.300-1.500 1.100M55.8 680.5h4" stroke="#7a4a00" stroke-width="1.100" fill="none"/><path d="M63 682l3 3-3 3-3-3z" fill="#fff4c0" stroke="#a87818" stroke-width=".9"/><rect x="52.5" y="692.5" width="13" height="13" rx="2.500" fill="#f7d468" stroke="#c89a28"/><rect x="53.5" y="693.5" width="11" height="4" rx="1.500" fill="#fdeaa0"/><path d="M61.5 695.2c-1.800-.4-2.600.6-2.800 2l-.9 5.500c-.2 1-.7 1.300-1.500 1.100M55.8 698.5h4" stroke="#7a4a00" stroke-width="1.100" fill="none"/><path d="M63 700l3 3-3 3-3-3z" fill="#fff4c0" stroke="#a87818" stroke-width=".9"/><rect x="52.5" y="710.5" width="13" height="13" rx="2.500" fill="#f7d468" stroke="#c89a28"/><rect x="53.5" y="711.5" width="11" height="4" rx="1.500" fill="#fdeaa0"/><path d="M61.5 713.2c-1.800-.4-2.600.6-2.800 2l-.9 5.500c-.2 1-.7 1.300-1.500 1.100M55.8 716.5h4" stroke="#7a4a00" stroke-width="1.100" fill="none"/><path d="M63 718l3 3-3 3-3-3z" fill="#fff4c0" stroke="#a87818" stroke-width=".9"/><rect x="52.5" y="728.5" width="13" height="13" rx="2.500" fill="#f7d468" stroke="#c89a28"/><rect x="53.5" y="729.5" width="11" height="4" rx="1.500" fill="#fdeaa0"/><path d="M61.5 731.2c-1.800-.4-2.600.6-2.800 2l-.9 5.500c-.2 1-.7 1.300-1.500 1.100M55.8 734.5h4" stroke="#7a4a00" stroke-width="1.100" fill="none"/><path d="M63 736l3 3-3 3-3-3z" fill="#fff4c0" stroke="#a87818" stroke-width=".9"/></svg>
<div class="t" style="left:53.60px;top:512.40px;font-size:12px;line-height:16px;color:#000;transform:scaleX(0.9486);transform-origin:0 50%;">Cuentas</div>
<div class="t" style="left:74.20px;top:530.40px;font-size:12px;line-height:16px;color:#000;letter-spacing:-0.017px;">Alpari-Demo</div>
<div class="t" style="left:96.00px;top:548.40px;font-size:12px;line-height:16px;color:#000;transform:scaleX(0.8914);transform-origin:0 50%;">13060648: Juan G.</div>
<div class="t" style="left:53.60px;top:566.40px;font-size:12px;line-height:16px;color:#000;letter-spacing:-0.131px;">Indicadores</div>
<div class="t" style="left:74.20px;top:584.40px;font-size:12px;line-height:16px;color:#000;letter-spacing:-0.079px;">Tendencia</div>
<div class="t" style="left:74.20px;top:602.40px;font-size:12px;line-height:16px;color:#000;transform:scaleX(0.9549);transform-origin:0 50%;">Osciladores</div>
<div class="t" style="left:74.20px;top:620.40px;font-size:12px;line-height:16px;color:#000;letter-spacing:-0.153px;">Volúmenes</div>
<div class="t" style="left:74.20px;top:638.40px;font-size:12px;line-height:16px;color:#000;letter-spacing:-0.038px;">Bill Williams</div>
<div class="t" style="left:74.20px;top:656.40px;font-size:12px;line-height:16px;color:#000;transform:scaleX(0.9300);transform-origin:0 50%;">Examples</div>
<div class="t" style="left:74.20px;top:674.40px;font-size:12px;line-height:16px;color:#000;letter-spacing:-0.063px;">Accelerator</div>
<div class="t" style="left:74.20px;top:692.40px;font-size:12px;line-height:16px;color:#000;letter-spacing:0.205px;">Accumulation</div>
<div class="t" style="left:74.20px;top:710.40px;font-size:12px;line-height:16px;color:#000;letter-spacing:-0.039px;">Alligator</div>
<div class="r" style="left:52px;top:727px;width:140px;height:6px;overflow:hidden;">
<div class="t" style="left:22.2px;top:0.8px;font-size:12px;line-height:16px;color:#000;">ATR</div></div>
<div class="r" style="left:4px;top:733px;width:215px;height:1px;background:#000;"></div>
<div class="r" style="left:7px;top:733px;width:60px;height:20px;background:#fff;border:1px solid #000;border-top:none;"></div>
<div class="t" style="left:17.40px;top:735.20px;font-size:12px;line-height:16px;color:#000;letter-spacing:0.143px;">Común</div>
<div class="t" style="left:77.60px;top:735.20px;font-size:12px;line-height:16px;color:#808080;transform:scaleX(0.9524);transform-origin:0 50%;">Favoritos</div>
<div class="r" style="left:135px;top:736px;width:1px;height:14px;background:#808080;"></div>
<div class="r" style="left:3px;top:757px;width:216px;height:1px;background:#fff;"></div>
<div class="r" style="left:1px;top:759px;width:220px;height:1px;background:#a0a0a0;"></div>
<div class="r" style="left:222px;top:106px;width:883px;height:1px;background:#8a8a8a;"></div>
<div class="r" style="left:221px;top:107px;width:1px;height:631px;background:#b4b4b4;"></div>
<div class="r" style="left:222px;top:107px;width:1px;height:631px;background:#6a6a6a;"></div>
<div class="r" style="left:223px;top:107px;width:882px;height:631px;background:#000;"></div>
<svg class="r" style="left:0px;top:0px;" width="1105" height="765" viewBox="0 0 1105 765"><path d="M258.5 109V507M258.5 511V626M258.5 631V715M290.5 109V507M290.5 511V626M290.5 631V715M322.5 109V507M322.5 511V626M322.5 631V715M354.5 109V507M354.5 511V626M354.5 631V715M386.5 109V507M386.5 511V626M386.5 631V715M418.5 109V507M418.5 511V626M418.5 631V715M450.5 109V507M450.5 511V626M450.5 631V715M482.5 109V507M482.5 511V626M482.5 631V715M514.5 109V507M514.5 511V626M514.5 631V715M546.5 109V507M546.5 511V626M546.5 631V715M578.5 109V507M578.5 511V626M578.5 631V715M610.5 109V507M610.5 511V626M610.5 631V715M642.5 109V507M642.5 511V626M642.5 631V715M674.5 109V507M674.5 511V626M674.5 631V715M706.5 109V507M706.5 511V626M706.5 631V715M738.5 109V507M738.5 511V626M738.5 631V715M770.5 109V507M770.5 511V626M770.5 631V715M802.5 109V507M802.5 511V626M802.5 631V715M834.5 109V507M834.5 511V626M834.5 631V715M866.5 109V507M866.5 511V626M866.5 631V715M898.5 109V507M898.5 511V626M898.5 631V715M930.5 109V507M930.5 511V626M930.5 631V715M962.5 109V507M962.5 511V626M962.5 631V715M994.5 109V507M994.5 511V626M994.5 631V715M1026.5 109V507M1026.5 511V626M1026.5 631V715M1058.5 109V507M1058.5 511V626M1058.5 631V715" stroke="#778899" stroke-width="1" stroke-dasharray="3 3" fill="none"/><path d="M362.500 110V507M362.500 510V626M362.500 629V715M746.500 110V507M746.500 510V626M746.500 629V715" stroke="#e8e8e8" stroke-width="1" stroke-dasharray="3 3" fill="none"/><path d="M233 131.5H1059M233 165.5H1059M227 199.5H1059M227 233.5H1059M227 267.5H1059M227 301.5H1059M227 335.5H1059M227 368.5H1059M227 402.5H1059M227 436.5H1059M227 470.5H1059M227 504.5H1059M226 611.500H1059" stroke="#778899" stroke-width="1" stroke-dasharray="3 3" fill="none"/><path d="M226 647.500H1059M226 698.500H1059" stroke="#b8c0c8" stroke-width="1" stroke-dasharray="3 3" fill="none"/><path d="M1060 131.5h3M1060 165.5h3M1060 199.5h3M1060 233.5h3M1060 267.5h3M1060 301.5h3M1060 335.5h3M1060 368.5h3M1060 402.5h3M1060 436.5h3M1060 470.5h3M1060 504.5h3M1060 611.5h3M1060 647.5h3M1060 698.5h3" stroke="#fff"/><path d="M226.5 716v4M290.5 716v4M354.5 716v4M418.5 716v4M482.5 716v4M546.5 716v4M610.5 716v4M674.5 716v4M738.5 716v4M802.5 716v4M866.5 716v4" stroke="#fff"/><path d="M886 110h10l-5 5z" fill="#778899"/><path d="M226 229.500H1059" stroke="#a0a8b0" stroke-width="1"/><polyline points="400,330 439.3,267 450,250 458,240 466,232 474,225 482,220.5 488,219.5 496,218.5 504,221 514,221.5 530,221.5 546,220.5 562,220.5 570,220 586,220.5 594,222 610,223 626,225 642,226 650,226 658,225 666,222.5 674,219.5 682,217.5 690,214.5 698,212.5 706,210 714,207.5 722,205 730,203 738,202 746,201.5 754,201 762,201.5 770,202.5 786,202.5 794,199 802,197 810,195.5 818,194 826,193 834,191.5 842,190 850,188.5 858,189 866,189.5 876,189.5 884,191.5 898,197 906,199 914,201.5 922,204.5" fill="none" stroke="#ffff00" stroke-width="1" shape-rendering="crispEdges"/><polyline points="300,420 323,267 330,240 338,222.5 346,219 354,214 362.5,221.5 370,214 378,209 386,206.5 394,202.5 402,201.5 410,203 418,204.5 426,210 434,215 442,219 450,223 458,229 466,232.5 474,235 482,237 490,236.5 498,234 506,232.5 514,232 522,230 530,227 538,224.5 546,223.5 554,223 562,216 570,208 578,203.5 586,198.5 594,204 602,210 610,213.5 618,219 626,225 634,232 642,239 650,235.5 658,229 666,222 674,217 682,213 690,201 698,188 706,177.5 714,173.5 722,171.5 730,170 738,168 742,168 746,175 754,180 762,185 770,190 778,193 786,194 794,195 802,195.5 810,195 818,194 826,193 834,196 842,197.5 850,199 858,201 866,203 874,205 882,208 890,209 898,212.5 906,216 914,218 922,222.5" fill="none" stroke="#00ffff" stroke-width="1" shape-rendering="crispEdges"/><polyline points="246,507 252,479 262,420 285,267 289,232 290.5,214.5 298,212 306.5,202 314,223 322.5,230.5 330,227 338,221 346,210 354,199 358,198 364,193.5 370,192.3 378,196 386,206 394,210 402,213 410,220 418,221.5 426,228 434,233.5 442,238 450,241.5 458,241.5 466,239 474,232 482,225 488,224.5 496,226 504,232 514,232.5 522,224 530,214.5 538,212 546,204 554,196 560,190.5 564,188.5 570,188.5 572,192 578,215 586,233 594,247 602,237.5 610,233 618,232 626,235.5 634,239 642,228 650,210 658,196 666,194 674,181 682,166.5 690,157 692,157 698,160 706,167 714,174 722,181.5 730,189 738,191 746,196.5 754,198.5 762,199 770,197.5 778,194 786,192 794,190.5 802,191 810,192 814,195 818,200 826,204 834,209 838,207 842,205 850,202 858,201.5 866,209 874,219 880,223.5 886,227 890,229 898,225.5 906,225.5" fill="none" stroke="#ff00ff" stroke-width="1" shape-rendering="crispEdges"/><path d="M226.5 427V495" stroke="#00ff00"/><rect x="224.5" y="448" width="4" height="40" fill="#000" stroke="#00ff00"/><path d="M234.5 393V450" stroke="#00ff00"/><rect x="232.5" y="402" width="4" height="46" fill="#000" stroke="#00ff00"/><path d="M242.5 377V410" stroke="#00ff00"/><rect x="240.5" y="386" width="4" height="22.5" fill="#000" stroke="#00ff00"/><path d="M250.5 230V367" stroke="#00ff00"/><rect x="248.5" y="235" width="4" height="132" fill="#000" stroke="#00ff00"/><path d="M258.5 219V300" stroke="#00ff00"/><rect x="256.5" y="233" width="4" height="17.5" fill="#fff" stroke="#00ff00"/><path d="M266.5 140V250" stroke="#00ff00"/><rect x="264.5" y="150" width="4" height="99.5" fill="#000" stroke="#00ff00"/><path d="M274.5 145V227" stroke="#00ff00"/><rect x="272.5" y="150" width="4" height="73.5" fill="#fff" stroke="#00ff00"/><path d="M282.5 212V248.5" stroke="#00ff00"/><rect x="280.5" y="221" width="4" height="3" fill="#000" stroke="#00ff00"/><path d="M290.5 216V253.5" stroke="#00ff00"/><rect x="288.5" y="220" width="4" height="8.5" fill="#fff" stroke="#00ff00"/><path d="M298.5 219V253.5" stroke="#00ff00"/><rect x="296.5" y="228.5" width="4" height="16" fill="#fff" stroke="#00ff00"/><path d="M306.5 207V248" stroke="#00ff00"/><rect x="304.5" y="209.5" width="4" height="33" fill="#000" stroke="#00ff00"/><path d="M314.5 189V213.5" stroke="#00ff00"/><rect x="312" y="209.5" width="5" height="1.5" fill="#00ff00"/><path d="M322.5 204V239.5" stroke="#00ff00"/><rect x="320.5" y="209" width="4" height="3" fill="#fff" stroke="#00ff00"/><path d="M330.5 189V212.5" stroke="#00ff00"/><rect x="328.5" y="194.5" width="4" height="18" fill="#000" stroke="#00ff00"/><path d="M338.5 155V201.5" stroke="#00ff00"/><rect x="336.5" y="160" width="4" height="34.5" fill="#000" stroke="#00ff00"/><path d="M346.5 150V214.5" stroke="#00ff00"/><rect x="344.5" y="160" width="4" height="46.5" fill="#fff" stroke="#00ff00"/><path d="M354.5 201.5V216.5" stroke="#00ff00"/><rect x="352.5" y="206.5" width="4" height="3.5" fill="#fff" stroke="#00ff00"/><path d="M362.5 187.5V213.5" stroke="#00ff00"/><rect x="360.5" y="203.5" width="4" height="7" fill="#000" stroke="#00ff00"/><path d="M370.5 192.5V226.5" stroke="#00ff00"/><rect x="368.5" y="204.5" width="4" height="16.5" fill="#fff" stroke="#00ff00"/><path d="M378.5 212V224.5" stroke="#00ff00"/><rect x="376.5" y="215.5" width="4" height="9" fill="#000" stroke="#00ff00"/><path d="M386.5 213V229" stroke="#00ff00"/><rect x="384.5" y="215.5" width="4" height="8" fill="#fff" stroke="#00ff00"/><path d="M394.5 211.5V227.5" stroke="#00ff00"/><rect x="392.5" y="222.5" width="4" height="3" fill="#fff" stroke="#00ff00"/><path d="M402.5 224V241" stroke="#00ff00"/><rect x="400.5" y="225.5" width="4" height="11" fill="#fff" stroke="#00ff00"/><path d="M410.5 232V244.5" stroke="#00ff00"/><rect x="408.5" y="236.5" width="4" height="2" fill="#fff" stroke="#00ff00"/><path d="M418.5 235V247" stroke="#00ff00"/><rect x="416.5" y="238.5" width="4" height="4" fill="#fff" stroke="#00ff00"/><path d="M426.5 237V249" stroke="#00ff00"/><rect x="424" y="241" width="5" height="1.5" fill="#00ff00"/><path d="M434.5 237V246.5" stroke="#00ff00"/><rect x="432.5" y="239.5" width="4" height="4" fill="#000" stroke="#00ff00"/><path d="M442.5 232V246" stroke="#00ff00"/><rect x="440.5" y="235" width="4" height="6.5" fill="#000" stroke="#00ff00"/><path d="M450.5 218.5V238.5" stroke="#00ff00"/><rect x="448.5" y="222.5" width="4" height="14" fill="#000" stroke="#00ff00"/><path d="M458.5 212V225.5" stroke="#00ff00"/><rect x="456.5" y="218.5" width="4" height="4" fill="#000" stroke="#00ff00"/><path d="M466.5 219V232.5" stroke="#00ff00"/><rect x="464.5" y="219.5" width="4" height="12.5" fill="#fff" stroke="#00ff00"/><path d="M474.5 227V234" stroke="#00ff00"/><rect x="472" y="231.5" width="5" height="1.5" fill="#00ff00"/><path d="M482.5 227.5V247.5" stroke="#00ff00"/><rect x="480.5" y="232" width="4" height="4.5" fill="#fff" stroke="#00ff00"/><path d="M490.5 224V243.5" stroke="#00ff00"/><rect x="488.5" y="227.5" width="4" height="10" fill="#000" stroke="#00ff00"/><path d="M498.5 208V232" stroke="#00ff00"/><rect x="496.5" y="209" width="4" height="20" fill="#000" stroke="#00ff00"/><path d="M506.5 188V216.5" stroke="#00ff00"/><rect x="504.5" y="206.5" width="4" height="2" fill="#000" stroke="#00ff00"/><path d="M514.5 201.5V232" stroke="#00ff00"/><rect x="512.5" y="206.5" width="4" height="14" fill="#fff" stroke="#00ff00"/><path d="M522.5 174V223.5" stroke="#00ff00"/><rect x="520.5" y="183" width="4" height="38" fill="#000" stroke="#00ff00"/><path d="M530.5 177V214" stroke="#00ff00"/><rect x="528.5" y="179" width="4" height="4.5" fill="#000" stroke="#00ff00"/><path d="M538.5 166V204" stroke="#00ff00"/><rect x="536.5" y="179" width="4" height="24.5" fill="#fff" stroke="#00ff00"/><path d="M546.5 180V222" stroke="#00ff00"/><rect x="544.5" y="183" width="4" height="20.5" fill="#000" stroke="#00ff00"/><path d="M554.5 170V430" stroke="#00ff00"/><rect x="552.5" y="182.5" width="4" height="237.5" fill="#fff" stroke="#00ff00"/><path d="M562.5 230V310" stroke="#00ff00"/><rect x="560.5" y="239" width="4" height="61" fill="#000" stroke="#00ff00"/><path d="M570.5 212V244.5" stroke="#00ff00"/><rect x="568.5" y="236.5" width="4" height="2" fill="#000" stroke="#00ff00"/><path d="M578.5 211V242.5" stroke="#00ff00"/><rect x="576.5" y="228" width="4" height="7.5" fill="#000" stroke="#00ff00"/><path d="M586.5 214V241.5" stroke="#00ff00"/><rect x="584" y="227.5" width="5" height="2" fill="#00ff00"/><path d="M594.5 213V247.5" stroke="#00ff00"/><rect x="592.5" y="228" width="4" height="8" fill="#fff" stroke="#00ff00"/><path d="M602.5 230V258" stroke="#00ff00"/><rect x="600.5" y="235.5" width="4" height="5" fill="#fff" stroke="#00ff00"/><path d="M610.5 232.5V255.5" stroke="#00ff00"/><rect x="608" y="240" width="5" height="2" fill="#00ff00"/><path d="M618.5 191.5V254.5" stroke="#00ff00"/><rect x="616.5" y="193" width="4" height="48.5" fill="#000" stroke="#00ff00"/><path d="M626.5 161V199.5" stroke="#00ff00"/><rect x="624.5" y="190" width="4" height="3.5" fill="#000" stroke="#00ff00"/><path d="M634.5 163V225" stroke="#00ff00"/><rect x="632.5" y="190.5" width="4" height="11.5" fill="#fff" stroke="#00ff00"/><path d="M642.5 181V218" stroke="#00ff00"/><rect x="640.5" y="191.5" width="4" height="10" fill="#000" stroke="#00ff00"/><path d="M650.5 134.5V212" stroke="#00ff00"/><rect x="648.5" y="146.5" width="4" height="43.5" fill="#000" stroke="#00ff00"/><path d="M658.5 136V177" stroke="#00ff00"/><rect x="656.5" y="147.5" width="4" height="8" fill="#fff" stroke="#00ff00"/><path d="M666.5 131.5V177" stroke="#00ff00"/><rect x="664.5" y="156.5" width="4" height="14" fill="#fff" stroke="#00ff00"/><path d="M674.5 137.5V177" stroke="#00ff00"/><rect x="672.5" y="158.5" width="4" height="13" fill="#000" stroke="#00ff00"/><path d="M682.5 146V174.5" stroke="#00ff00"/><rect x="680.5" y="158.5" width="4" height="15" fill="#fff" stroke="#00ff00"/><path d="M690.5 167V189.5" stroke="#00ff00"/><rect x="688.5" y="172" width="4" height="16" fill="#fff" stroke="#00ff00"/><path d="M698.5 180V202.5" stroke="#00ff00"/><rect x="696.5" y="183.5" width="4" height="6" fill="#000" stroke="#00ff00"/><path d="M706.5 180V200.5" stroke="#00ff00"/><rect x="704.5" y="183" width="4" height="12.5" fill="#fff" stroke="#00ff00"/><path d="M714.5 187V198" stroke="#00ff00"/><rect x="712" y="194.5" width="5" height="1.5" fill="#00ff00"/><path d="M722.5 184.5V199.5" stroke="#00ff00"/><rect x="720.5" y="194" width="4" height="4.5" fill="#fff" stroke="#00ff00"/><path d="M730.5 195.5V206.5" stroke="#00ff00"/><rect x="728.5" y="198.5" width="4" height="5" fill="#fff" stroke="#00ff00"/><path d="M738.5 190.5V207.5" stroke="#00ff00"/><rect x="736.5" y="196.5" width="4" height="7" fill="#000" stroke="#00ff00"/><path d="M746.5 187.5V203.5" stroke="#00ff00"/><rect x="744.5" y="192" width="4" height="5" fill="#000" stroke="#00ff00"/><path d="M754.5 188V194.5" stroke="#00ff00"/><rect x="752" y="192.5" width="5" height="1.5" fill="#00ff00"/><path d="M762.5 187V195" stroke="#00ff00"/><rect x="760.5" y="189.5" width="4" height="4" fill="#000" stroke="#00ff00"/><path d="M770.5 185.5V195.5" stroke="#00ff00"/><rect x="768.5" y="190" width="4" height="2.5" fill="#fff" stroke="#00ff00"/><path d="M778.5 179V198.5" stroke="#00ff00"/><rect x="776" y="192.5" width="5" height="1.5" fill="#00ff00"/><path d="M786.5 181V195.5" stroke="#00ff00"/><rect x="784" y="193" width="5" height="1.5" fill="#00ff00"/><path d="M794.5 190V219.5" stroke="#00ff00"/><rect x="792.5" y="192" width="4" height="26" fill="#fff" stroke="#00ff00"/><path d="M802.5 199.5V219.5" stroke="#00ff00"/><rect x="800.5" y="206.5" width="4" height="11.5" fill="#000" stroke="#00ff00"/><path d="M810.5 196.5V211" stroke="#00ff00"/><rect x="808.5" y="202.5" width="4" height="4" fill="#000" stroke="#00ff00"/><path d="M818.5 198.5V206.5" stroke="#00ff00"/><rect x="816" y="203" width="5" height="1.5" fill="#00ff00"/><path d="M826.5 195.5V205.5" stroke="#00ff00"/><rect x="824.5" y="198.5" width="4" height="5" fill="#000" stroke="#00ff00"/><path d="M834.5 197V210.5" stroke="#00ff00"/><rect x="832.5" y="198" width="4" height="7.5" fill="#fff" stroke="#00ff00"/><path d="M842.5 205.5V226" stroke="#00ff00"/><rect x="840.5" y="206.5" width="4" height="17" fill="#fff" stroke="#00ff00"/><path d="M850.5 221V234.5" stroke="#00ff00"/><rect x="848.5" y="222" width="4" height="6.5" fill="#fff" stroke="#00ff00"/><path d="M858.5 225.5V235.5" stroke="#00ff00"/><rect x="856.5" y="227.5" width="4" height="2" fill="#fff" stroke="#00ff00"/><path d="M866.5 225.5V234.5" stroke="#00ff00"/><rect x="864.5" y="226.5" width="4" height="2" fill="#000" stroke="#00ff00"/><path d="M874.5 216V228" stroke="#00ff00"/><rect x="872.5" y="220.5" width="4" height="6.5" fill="#000" stroke="#00ff00"/><path d="M882.5 219V233" stroke="#00ff00"/><rect x="880.5" y="221.5" width="4" height="8" fill="#fff" stroke="#00ff00"/><path d="M226.500 600V611M234.500 588V611M242.500 578V611M250.500 553V611" stroke="#c0c0c0"/><polyline points="226,617 234,612.5 242,608.5 250,601 258,592" fill="none" stroke="#ffff00" stroke-width="1" shape-rendering="crispEdges"/><polyline points="226,636.5 250,636.5 262,638 290,649 298,654 306,656.5 314,661 322,665 330,674.5 338,662 346,654.5 354,654.5 362,663 370,672 378,677.5 386,693 394,699 402,708.5 410,708.5 418,708.5 426,707.5 434,705 442,696 450,677 458,662.5 466,660.5 474,667 482,682 490,678 498,663 506,652.5 514,658.5 522,656.5 530,649.5 538,649.5 546,652 554,680.5 562,685.5 570,694.5 578,685 586,681.5 594,681.5 602,682 610,687 618,671 626,660 634,652.5 642,659.5 650,652 658,647.5 666,647 674,648 682,657.5 690,664 698,676 706,685 714,693 722,704 730,710.5 738,708 746,706 754,690 762,674 770,664.5 778,665.5 786,667 794,688.5 802,694 810,694.5 818,682 826,678 834,679 842,688 850,697 858,706 866,700 874,695.5 880,695.5 882,697" fill="none" stroke="#a8a8a8" stroke-width="1" shape-rendering="crispEdges"/><polyline points="226,653 235,640.5 244,636 251,634.5 270,638 296,647 306,652 314,657 322,661.5 330,667.5 338,668.5 346,664 354,657.5 362,657.5 370,665 378,674 386,683.5 394,693 402,701 410,705.5 418,708.5 426,708.5 434,707 442,703 450,693 458,680 466,667 474,663 482,671 490,676 498,674 506,665 514,657.5 522,656 530,654.5 538,651.5 546,650.5 554,661 562,674 570,686.5 578,688 586,686 594,683 602,682 610,683.5 618,680.5 626,674 634,661 642,657 650,653.5 658,651 666,648 674,647.5 682,651 690,657 698,666.5 706,676.5 714,686 722,695 730,703 738,707 746,707.5 754,700.5 762,688.5 770,676 778,668 786,666.5 794,676 802,685 810,692 818,690 826,685.5 834,681 842,682.5 850,690 858,699 866,702.5 874,701 882,698" fill="none" stroke="#ffff00" stroke-width="1" shape-rendering="crispEdges"/><path d="M225.500 507.500V109.500H1060" stroke="#fff" fill="none"/><path d="M225 507.500H1060" stroke="#fff"/><path d="M225.500 626.500V509.500H1060M225 626.500H1060" stroke="#fff" fill="none"/><path d="M225.500 715.500V628.500H1060M225 715.500H1060" stroke="#fff" fill="none"/><path d="M1059.500 109V716" stroke="#fff"/><path d="M229 120.500l3.700-4 3.700 4z" fill="#fff"/><rect x="1061" y="225" width="41" height="10" fill="#fff"/></svg>
<div class="t" style="left:241.50px;top:111.75px;font-size:9.3px;line-height:13.3px;color:#fff;letter-spacing:-0.031px;">EURUSD,M30  1.10758 1.10762 1.10737 1.10742</div>
<div class="t" style="left:1065.50px;top:124.40px;font-size:9.4px;line-height:13.4px;color:#fff;transform:scaleX(0.9626);transform-origin:0 50%;">1.10930</div>
<div class="t" style="left:1065.50px;top:158.30px;font-size:9.4px;line-height:13.4px;color:#fff;transform:scaleX(0.9626);transform-origin:0 50%;">1.10865</div>
<div class="t" style="left:1065.50px;top:192.50px;font-size:9.4px;line-height:13.4px;color:#fff;transform:scaleX(0.9626);transform-origin:0 50%;">1.10800</div>
<div class="t" style="left:1065.50px;top:260.50px;font-size:9.4px;line-height:13.4px;color:#fff;transform:scaleX(0.9626);transform-origin:0 50%;">1.10670</div>
<div class="t" style="left:1065.50px;top:294.10px;font-size:9.4px;line-height:13.4px;color:#fff;transform:scaleX(0.9626);transform-origin:0 50%;">1.10605</div>
<div class="t" style="left:1065.50px;top:328.00px;font-size:9.4px;line-height:13.4px;color:#fff;transform:scaleX(0.9626);transform-origin:0 50%;">1.10540</div>
<div class="t" style="left:1065.50px;top:361.30px;font-size:9.4px;line-height:13.4px;color:#fff;transform:scaleX(0.9626);transform-origin:0 50%;">1.10475</div>
<div class="t" style="left:1065.50px;top:395.10px;font-size:9.4px;line-height:13.4px;color:#fff;transform:scaleX(0.9626);transform-origin:0 50%;">1.10410</div>
<div class="t" style="left:1065.50px;top:429.30px;font-size:9.4px;line-height:13.4px;color:#fff;transform:scaleX(0.9626);transform-origin:0 50%;">1.10345</div>
<div class="t" style="left:1065.50px;top:463.10px;font-size:9.4px;line-height:13.4px;color:#fff;transform:scaleX(0.9626);transform-origin:0 50%;">1.10280</div>
<div class="t" style="left:1065.50px;top:496.90px;font-size:9.4px;line-height:13.4px;color:#fff;transform:scaleX(0.9626);transform-origin:0 50%;">1.10215</div>
<div class="t" style="left:1065.50px;top:226.40px;font-size:9.4px;line-height:13.4px;color:#fff;transform:scaleX(0.9626);transform-origin:0 50%;">1.10735</div>
<div class="r" style="left:1061px;top:225px;width:41px;height:10px;background:#fff;"></div>
<div class="t" style="left:1065.50px;top:222.80px;font-size:9.4px;line-height:13.4px;color:#000;transform:scaleX(0.9626);transform-origin:0 50%;">1.10742</div>
<div class="t" style="left:1063.50px;top:510.50px;font-size:9px;line-height:13px;color:#fff;letter-spacing:-0.130px;">0.001737</div>
<div class="t" style="left:1063.50px;top:605.50px;font-size:9px;line-height:13px;color:#fff;letter-spacing:-0.129px;font-weight:bold;">0.00</div>
<div class="t" style="left:1063.50px;top:614.40px;font-size:9px;line-height:13px;color:#fff;letter-spacing:-0.015px;">-0.000248</div>
<div class="t" style="left:1063.50px;top:629.90px;font-size:9px;line-height:13px;color:#fff;">100</div>
<div class="t" style="left:1063.50px;top:642.10px;font-size:9px;line-height:13px;color:#fff;">80</div>
<div class="t" style="left:1063.50px;top:692.90px;font-size:9px;line-height:13px;color:#fff;">20</div>
<div class="t" style="left:1063.50px;top:703.70px;font-size:9px;line-height:13px;color:#fff;">0</div>
<div class="t" style="left:230.50px;top:512.55px;font-size:9.3px;line-height:13.3px;color:#fff;">MACD(12,26,9) 0.000248 0.000310</div>
<div class="t" style="left:230.50px;top:631.95px;font-size:9.3px;line-height:13.3px;color:#fff;">Stoch(5,3,3) 24.3243 19.0355</div>
<div class="t" style="left:225.60px;top:719.30px;font-size:9.6px;line-height:13.6px;color:#fff;transform:scaleX(0.9410);transform-origin:0 50%;">2 Dec 2019</div>
<div class="t" style="left:289.60px;top:719.30px;font-size:9.6px;line-height:13.6px;color:#fff;transform:scaleX(0.9563);transform-origin:0 50%;">2 Dec 19:30</div>
<div class="t" style="left:353.60px;top:719.30px;font-size:9.6px;line-height:13.6px;color:#fff;transform:scaleX(0.9563);transform-origin:0 50%;">2 Dec 23:30</div>
<div class="t" style="left:417.60px;top:719.30px;font-size:9.6px;line-height:13.6px;color:#fff;transform:scaleX(0.9563);transform-origin:0 50%;">3 Dec 03:30</div>
<div class="t" style="left:481.60px;top:719.30px;font-size:9.6px;line-height:13.6px;color:#fff;transform:scaleX(0.9563);transform-origin:0 50%;">3 Dec 07:30</div>
<div class="t" style="left:545.60px;top:719.30px;font-size:9.6px;line-height:13.6px;color:#fff;letter-spacing:-0.141px;">3 Dec 11:30</div>
<div class="t" style="left:609.60px;top:719.30px;font-size:9.6px;line-height:13.6px;color:#fff;transform:scaleX(0.9563);transform-origin:0 50%;">3 Dec 15:30</div>
<div class="t" style="left:673.60px;top:719.30px;font-size:9.6px;line-height:13.6px;color:#fff;transform:scaleX(0.9563);transform-origin:0 50%;">3 Dec 19:30</div>
<div class="t" style="left:737.60px;top:719.30px;font-size:9.6px;line-height:13.6px;color:#fff;transform:scaleX(0.9563);transform-origin:0 50%;">3 Dec 23:30</div>
<div class="t" style="left:801.60px;top:719.30px;font-size:9.6px;line-height:13.6px;color:#fff;transform:scaleX(0.9563);transform-origin:0 50%;">4 Dec 03:30</div>
<div class="t" style="left:865.60px;top:719.30px;font-size:9.6px;line-height:13.6px;color:#fff;transform:scaleX(0.9563);transform-origin:0 50%;">4 Dec 07:30</div>
<div class="r" style="left:229px;top:127px;width:193px;height:56px;background:#000;"></div>
<div class="r" style="left:229px;top:127px;width:46px;height:23px;background:linear-gradient(#4a4af0,#3636e0);"></div>
<div class="r" style="left:377px;top:127px;width:45px;height:23px;background:linear-gradient(#4a4af0,#3636e0);"></div>
<div class="r" style="left:229px;top:150px;width:96px;height:33px;background:linear-gradient(#3232e0,#1c1ccc 55%,#1010b4);"></div>
<div class="r" style="left:327px;top:150px;width:95px;height:33px;background:linear-gradient(#3232e0,#1c1ccc 55%,#1010b4);"></div>
<div class="r" style="left:233px;top:149px;width:38px;height:1px;background:#8a8af8;"></div>
<div class="r" style="left:380px;top:149px;width:38px;height:1px;background:#8a8af8;"></div>
<div class="r" style="left:277px;top:127px;width:97px;height:20px;background:#fff;border:1px solid #888;"></div>
<div class="r" style="left:278px;top:128px;width:19px;height:18px;background:linear-gradient(#f4f4f4,#d4d4d4);border-right:1px solid #aaa;"></div>
<div class="r" style="left:354px;top:128px;width:19px;height:18px;background:linear-gradient(#f4f4f4,#d4d4d4);border-left:1px solid #aaa;"></div>
<svg class="r" style="left:277px;top:127px;" width="97" height="20" viewBox="0 0 97 20"><path d="M7.500 8.500h5l-2.500 3z" fill="#000"/><path d="M84.500 11.500h5l-2.500-3z" fill="#000"/></svg>
<div class="t" style="left:239.60px;top:129.85px;font-size:12.5px;line-height:16.5px;color:#fff;transform:scaleX(0.7325);transform-origin:0 50%;">SELL</div>
<div class="t" style="left:387.40px;top:129.85px;font-size:12.5px;line-height:16.5px;color:#fff;transform:scaleX(0.8170);transform-origin:0 50%;">BUY</div>
<div class="t" style="left:325.47px;top:128.95px;font-size:12.5px;line-height:16.5px;color:#000;transform:scaleX(0.8139);transform-origin:100% 50%;">1.00</div>
<div class="t" style="left:244.00px;top:166.15px;font-size:11.5px;line-height:15.5px;color:#fff;letter-spacing:-0.046px;font-weight:bold;">1.10</div>
<div class="t" style="left:342.20px;top:166.15px;font-size:11.5px;line-height:15.5px;color:#fff;letter-spacing:0.004px;font-weight:bold;">1.10</div>
<div class="t" style="left:271.90px;top:149.00px;font-size:30px;line-height:34px;color:#fff;transform:scaleX(0.9589);transform-origin:0 50%;">74</div>
<div class="t" style="left:369.40px;top:149.00px;font-size:30px;line-height:34px;color:#fff;transform:scaleX(0.9379);transform-origin:0 50%;">75</div>
<div class="t" style="left:309.00px;top:151.35px;font-size:11.5px;line-height:15.5px;color:#fff;font-weight:bold;">2</div>
<div class="t" style="left:405.50px;top:151.35px;font-size:11.5px;line-height:15.5px;color:#fff;font-weight:bold;">2</div>
<div class="r" style="left:222px;top:737px;width:883px;height:2px;background:#fff;"></div>
<div class="r" style="left:222px;top:739px;width:883px;height:21px;background:#f0f0f0;"></div>
<div class="r" style="left:222px;top:739px;width:883px;height:1px;background:#000;"></div>
<div class="r" style="left:320px;top:739px;width:92px;height:19px;background:#fff;border:1px solid #000;border-top:none;"></div>
<div class="r" style="left:222px;top:739px;width:1px;height:19px;background:#808080;"></div>
<div class="t" style="left:237.60px;top:741.40px;font-size:12px;line-height:16px;color:#808080;transform:scaleX(0.9370);transform-origin:0 50%;">USDCHF,M30</div>
<div class="t" style="left:330.00px;top:741.40px;font-size:12px;line-height:16px;color:#000;transform:scaleX(0.8959);transform-origin:0 50%;">EURUSD,M30</div>
<div class="t" style="left:422.00px;top:741.40px;font-size:12px;line-height:16px;color:#808080;transform:scaleX(0.9114);transform-origin:0 50%;">GBPUSD,M30</div>
<div class="t" style="left:514.00px;top:741.40px;font-size:12px;line-height:16px;color:#808080;transform:scaleX(0.9107);transform-origin:0 50%;">USDJPY,M30</div>
<div class="r" style="left:503px;top:742px;width:1px;height:14px;background:#808080;"></div>
<div class="r" style="left:591px;top:742px;width:1px;height:14px;background:#808080;"></div>
<svg class="r" style="left:1060px;top:742px;" width="45" height="12" viewBox="0 0 45 12"><path d="M15 6l3.300-3v6z" fill="#a0a0a0"/><path d="M37.300 6l-3.300-3v6z" fill="#a0a0a0"/></svg>
<div class="r" style="left:0px;top:760px;width:1105px;height:3px;background:#fff;"></div>
<div class="r" style="left:0px;top:763px;width:1105px;height:1px;background:#a0a0a0;"></div>
<div class="r" style="left:252px;top:267px;width:753px;height:1px;background:rgba(0,0,0,.75);"></div>
<div class="r" style="left:252px;top:268px;width:753px;height:379px;background:#f0f0f0;"></div>
<div class="r" style="left:252px;top:268px;width:753px;height:30px;background:#fff;"></div>
<div class="r" style="left:252px;top:268px;width:1px;height:379px;background:#fff;"></div>
<div class="t" style="left:260.70px;top:275.60px;font-size:12px;line-height:16px;color:#000;transform:scaleX(0.9595);transform-origin:0 50%;">Orden</div>
<svg class="r" style="left:880px;top:272px;" width="115" height="20" viewBox="0 0 115 20"><path d="M6 10.500h10" stroke="#000" stroke-width="1"/><rect x="51.500" y="5.500" width="9" height="9" fill="none" stroke="#ccc" stroke-width="1"/><path d="M97 5l10 10M107 5l-10 10" stroke="#000" stroke-width="1.100"/></svg>
<div class="r" style="left:260px;top:312px;width:300px;height:326px;background:#fff;border-top:1px solid #a0a0a0;border-left:1px solid #a0a0a0;border-right:1px solid #fff;border-bottom:1px solid #fff;"></div>
<div class="r" style="left:261px;top:313px;width:298px;height:324px;background:#fff;border-top:1px solid #696969;border-left:1px solid #696969;border-right:1px solid #e3e3e3;border-bottom:1px solid #e3e3e3;"></div>
<svg class="r" style="left:0px;top:0px;" width="1105" height="765" viewBox="0 0 1105 765"><path d="M297.5 316V634M329.5 316V634M361.5 316V634M393.5 316V634M425.5 316V634M457.5 316V634M489.5 316V634M265 345.5H514M265 377.5H514M265 409.5H514M265 441.5H514M265 473.5H514M265 505.5H514M265 537.5H514M265 569.5H514M265 601.5H514" stroke="#c0c0c0" stroke-width="1" stroke-dasharray="3 3" fill="none"/><rect x="264" y="315.500" width="251" height="319" fill="none" stroke="#000" stroke-width="1.400"/><path d="M515 345.5h2.500M515 377.5h2.500M515 409.5h2.500M515 441.5h2.500M515 473.5h2.500M515 505.5h2.500M515 537.5h2.500M515 569.5h2.500M515 601.5h2.500M515 633.5h2.500" stroke="#000"/><polyline points="264.8,362.0 265.8,367.9 266.5,372.5 267.4,362.0 268.5,353.3 269.5,344.1 272.4,344.1 273.4,349.6 274.3,362.0 275.3,353.3 276.3,362.0 277.4,381.7 278.3,371.9 279.3,353.3 280.2,362.0 281.3,372.5 282.3,372.5 283.4,353.3 284.4,367.9 285.5,362.0 286.5,367.9 287.6,372.5 288.6,377.1 289.4,395.4 290.3,409.4 291.4,400.6 292.3,381.7 293.3,358.1 294.4,353.3 295.5,377.1 296.6,395.4 297.5,400.6 298.3,367.9 299.6,362.0 301.2,353.3 305.3,353.3 306.4,362.0 307.4,372.5 308.5,372.5 309.5,353.3 310.3,362.0 311.4,353.3 313.2,344.1 314.2,353.3 316.6,353.3 317.5,362.0 318.4,344.1 319.2,353.3 320.3,344.1 322.3,344.1 323.4,353.3 324.4,353.3 325.5,362.0 326.5,353.3 327.6,344.1 328.6,344.1 329.7,362.0 330.7,353.3 331.6,362.0 332.5,353.3 334.5,344.1 336.5,344.1 337.5,353.3 338.6,367.9 339.6,372.5 340.7,358.1 341.4,353.3 342.5,362.0 343.5,362.0 344.3,367.9 345.4,372.5 345.9,395.4 346.7,396.7 346.7,425.0 346.7,437.4 347.5,437.4 347.7,461.6 348.5,466.6 349.3,437.4 350.1,443.3 350.9,462.9 351.6,475.4 352.7,475.4 353.5,494.3 354.5,503.5 355.0,494.3 358.2,494.3 358.7,475.4 359.5,456.4 360.3,475.4 360.8,462.9 361.3,485.2 362.1,466.6 362.9,475.4 363.4,485.2 363.9,475.4 364.5,466.6 514.0,466.6" fill="none" stroke="#ff5050" stroke-width="1" shape-rendering="crispEdges"/><polyline points="264.8,456.4 269.1,456.4 269.5,447.2 270.3,456.4 271.1,447.2 272.1,456.4 276.3,456.4 277.0,466.6 277.6,475.4 278.4,466.6 279.3,456.4 280.2,462.9 281.3,475.4 282.3,462.9 283.4,456.4 284.4,466.6 287.3,466.6 288.3,475.4 289.4,489.1 290.4,503.5 291.0,494.3 291.7,494.3 292.3,503.5 292.7,485.2 293.6,461.6 294.4,456.4 295.5,475.4 296.6,489.1 297.5,494.3 298.3,485.2 298.8,470.8 299.9,461.6 300.6,456.4 301.4,461.6 302.5,466.6 303.5,452.5 304.4,447.2 305.3,456.4 306.4,456.4 307.4,475.4 308.5,466.6 309.5,456.4 311.4,456.4 312.4,447.2 313.5,447.2 314.2,456.4 315.3,447.2 316.1,456.4 317.1,447.2 318.2,456.4 318.7,447.2 319.5,456.4 320.3,447.2 321.0,456.4 321.8,447.2 322.6,456.4 323.4,447.2 323.9,456.4 324.7,466.6 327.3,466.6 328.6,456.4 334.5,456.4 335.4,447.2 336.5,461.6 337.5,466.6 341.2,466.6 342.4,456.4 343.3,462.9 344.3,466.6 345.4,470.8 345.9,494.3 346.7,495.6 346.6,520.0 346.6,536.5 347.4,536.5 347.4,559.2 348.6,559.2 349.3,549.8 350.2,555.3 350.5,569.4 351.6,569.4 352.1,578.8 353.3,578.8 354.0,597.6 354.6,606.2 355.5,597.6 356.5,606.2 357.1,592.9 358.4,592.9 358.7,578.8 359.6,578.8 359.9,569.4 360.9,569.4 361.5,588.2 362.1,578.8 363.1,588.2 363.7,578.8 364.6,578.8 364.6,563.9 365.6,563.9 365.6,559.2 514.0,559.2" fill="none" stroke="#0060ff" stroke-width="1" shape-rendering="crispEdges"/><rect x="516" y="461" width="41" height="11" fill="#ff6060"/><rect x="516" y="554" width="41" height="11" fill="#0060ff"/></svg>
<div class="t" style="left:267.50px;top:316.50px;font-size:9.2px;line-height:13.2px;color:#000;letter-spacing:-0.057px;">EURUSD</div>
<div class="t" style="left:520.30px;top:339.40px;font-size:10px;line-height:14px;color:#000;transform:scaleX(0.9045);transform-origin:0 50%;">1.10765</div>
<div class="t" style="left:520.30px;top:371.40px;font-size:10px;line-height:14px;color:#000;transform:scaleX(0.9045);transform-origin:0 50%;">1.10761</div>
<div class="t" style="left:520.30px;top:403.40px;font-size:10px;line-height:14px;color:#000;transform:scaleX(0.9045);transform-origin:0 50%;">1.10758</div>
<div class="t" style="left:520.30px;top:435.40px;font-size:10px;line-height:14px;color:#000;transform:scaleX(0.9045);transform-origin:0 50%;">1.10754</div>
<div class="t" style="left:520.30px;top:467.40px;font-size:10px;line-height:14px;color:#000;transform:scaleX(0.9045);transform-origin:0 50%;">1.10751</div>
<div class="t" style="left:520.30px;top:499.40px;font-size:10px;line-height:14px;color:#000;transform:scaleX(0.9045);transform-origin:0 50%;">1.10748</div>
<div class="t" style="left:520.30px;top:531.40px;font-size:10px;line-height:14px;color:#000;transform:scaleX(0.9045);transform-origin:0 50%;">1.10744</div>
<div class="t" style="left:520.30px;top:563.40px;font-size:10px;line-height:14px;color:#000;transform:scaleX(0.9045);transform-origin:0 50%;">1.10741</div>
<div class="t" style="left:520.30px;top:595.40px;font-size:10px;line-height:14px;color:#000;transform:scaleX(0.9045);transform-origin:0 50%;">1.10737</div>
<div class="t" style="left:520.30px;top:624.70px;font-size:10px;line-height:14px;color:#000;transform:scaleX(0.9045);transform-origin:0 50%;">1.10734</div>
<div class="r" style="left:516px;top:461px;width:41px;height:11px;background:#ff6060;"></div>
<div class="t" style="left:520.30px;top:460.20px;font-size:10px;line-height:14px;color:#fff;transform:scaleX(0.9045);transform-origin:0 50%;">1.10752</div>
<div class="r" style="left:516px;top:554px;width:41px;height:11px;background:#0060ff;"></div>
<div class="t" style="left:520.30px;top:553.20px;font-size:10px;line-height:14px;color:#fff;transform:scaleX(0.9045);transform-origin:0 50%;">1.10742</div>
<div class="t" style="left:616.70px;top:314.10px;font-size:11px;line-height:15px;color:#000;transform:scaleX(0.9053);transform-origin:0 50%;">Símbolo:</div>
<div class="r" style="left:665px;top:311px;width:323px;height:21px;background:#e1e1e1;border:1px solid #adadad;"></div>
<div class="t" style="left:668.50px;top:315.00px;font-size:11px;line-height:15px;color:#000;transform:scaleX(0.9180);transform-origin:0 50%;">EURUSD, Euro vs US Dollar</div>
<div class="t" style="left:612.80px;top:340.30px;font-size:11px;line-height:15px;color:#000;transform:scaleX(0.9419);transform-origin:0 50%;">Volumen:</div>
<div class="r" style="left:665px;top:337px;width:105px;height:21px;background:#fff;border:1px solid #7a7a7a;"></div>
<div class="t" style="left:671.90px;top:339.90px;font-size:11px;line-height:15px;color:#000;transform:scaleX(0.9342);transform-origin:0 50%;">1.00</div>
<div class="t" style="left:606.40px;top:366.00px;font-size:11px;line-height:15px;color:#000;transform:scaleX(0.9543);transform-origin:0 50%;">Stop Loss:</div>
<div class="r" style="left:665px;top:363px;width:88px;height:20px;background:#fff;border:1px solid #7a7a7a;"></div>
<div class="t" style="left:707.70px;top:366.40px;font-size:11px;line-height:15px;color:#000;letter-spacing:-0.051px;">0.00000</div>
<div class="r" style="left:752px;top:363px;width:17px;height:20px;background:#f0f0f0;border:1px solid #adadad;"></div>
<div class="r" style="left:752px;top:373px;width:17px;height:1px;background:#adadad;"></div>
<div class="t" style="left:818.60px;top:366.00px;font-size:11px;line-height:15px;color:#000;letter-spacing:0.065px;">Take Profit:</div>
<div class="r" style="left:882px;top:363px;width:88px;height:20px;background:#fff;border:1px solid #7a7a7a;"></div>
<div class="t" style="left:924.60px;top:366.40px;font-size:11px;line-height:15px;color:#000;letter-spacing:-0.051px;">0.00000</div>
<div class="r" style="left:969px;top:363px;width:17px;height:20px;background:#f0f0f0;border:1px solid #adadad;"></div>
<div class="r" style="left:969px;top:373px;width:17px;height:1px;background:#adadad;"></div>
<div class="t" style="left:597.80px;top:392.10px;font-size:11px;line-height:15px;color:#000;letter-spacing:-0.156px;">Comentario:</div>
<div class="r" style="left:665px;top:389px;width:323px;height:20px;background:#fff;border:1px solid #7a7a7a;"></div>
<div class="t" style="left:632.70px;top:418.50px;font-size:11px;line-height:15px;color:#000;letter-spacing:-0.149px;">Tipo:</div>
<div class="r" style="left:665px;top:415px;width:323px;height:21px;background:#e1e1e1;border:1px solid #adadad;"></div>
<div class="t" style="left:668.50px;top:419.10px;font-size:11px;line-height:15px;color:#000;letter-spacing:-0.083px;">Ejecución Instantánea</div>
<div class="r" style="left:567px;top:451px;width:429px;height:187px;border:1px solid #dcdcdc;"></div>
<div class="r" style="left:573px;top:445px;width:112px;height:12px;background:#f0f0f0;"></div>
<div class="t" style="left:575.50px;top:444.10px;font-size:11px;line-height:15px;color:#000;letter-spacing:-0.073px;">Ejecución Instantánea</div>
<div class="t" style="left:676.90px;top:473.40px;font-size:26px;line-height:30px;color:#000;letter-spacing:-0.005px;">1.1074</div>
<div class="t" style="left:757.50px;top:478.60px;font-size:20px;line-height:24px;color:#000;">2</div>
<div class="t" style="left:777.50px;top:473.40px;font-size:26px;line-height:30px;color:#000;">/</div>
<div class="t" style="left:795.50px;top:473.40px;font-size:26px;line-height:30px;color:#000;letter-spacing:-0.005px;">1.1075</div>
<div class="t" style="left:876.00px;top:478.60px;font-size:20px;line-height:24px;color:#000;">2</div>
<div class="r" style="left:583px;top:518px;width:186px;height:21px;background:#e1e1e1;border:1px solid #adadad;"></div>
<div class="r" style="left:585px;top:520px;width:182px;height:17px;background:#ff8080;"></div>
<div class="r" style="left:793px;top:518px;width:186px;height:21px;background:#e1e1e1;border:1px solid #adadad;"></div>
<div class="r" style="left:795px;top:520px;width:182px;height:17px;background:#a0c0ff;"></div>
<div class="t" style="left:659.00px;top:521.90px;font-size:11px;line-height:15px;color:#000;transform:scaleX(0.9580);transform-origin:0 50%;">Vender</div>
<div class="t" style="left:864.60px;top:521.90px;font-size:11px;line-height:15px;color:#000;transform:scaleX(0.9512);transform-origin:0 50%;">Comprar</div>
<div class="r" style="left:583px;top:547px;width:396px;height:21px;background:#c8c8c8;border:1px solid #b8b8b8;"></div>
<div class="r" style="left:582px;top:583px;width:13px;height:13px;background:#fff;border:1px solid #333;"></div>
<div class="t" style="left:597.90px;top:583.00px;font-size:11px;line-height:15px;color:#000;transform:scaleX(0.9574);transform-origin:0 50%;">Permitir desviación máxima del precio cotizado</div>
<div class="t" style="left:690.30px;top:610.20px;font-size:11px;line-height:15px;color:#000;transform:scaleX(0.9521);transform-origin:0 50%;">Desviación máxima:</div>
<div class="r" style="left:795px;top:608px;width:59px;height:19px;background:#f4f4f4;border:1px solid #cfcfcf;"></div>
<div class="t" style="left:801.00px;top:610.40px;font-size:11px;line-height:15px;color:#888;">0</div>
<div class="t" style="left:859.70px;top:610.20px;font-size:11px;line-height:15px;color:#000;letter-spacing:-0.071px;">puntos</div>
<svg class="r" style="left:0px;top:0px;" width="1105" height="765" viewBox="0 0 1105 765"><path d="M975.5 319.5l4 4 4-4" stroke="#444" stroke-width="1" fill="none"/><path d="M975.5 423.5l4 4 4-4" stroke="#444" stroke-width="1" fill="none"/><path d="M756.7 345.8l4 4 4-4" stroke="#444" stroke-width="1" fill="none"/><path d="M842.5 615.5l4 4 4-4" stroke="#999" stroke-width="1" fill="none"/><path d="M757 371h7l-3.500-4zM757 375h7l-3.500 4zM974 371h7l-3.500-4zM974 375h7l-3.500 4z" fill="#000"/></svg>
</body></html>
